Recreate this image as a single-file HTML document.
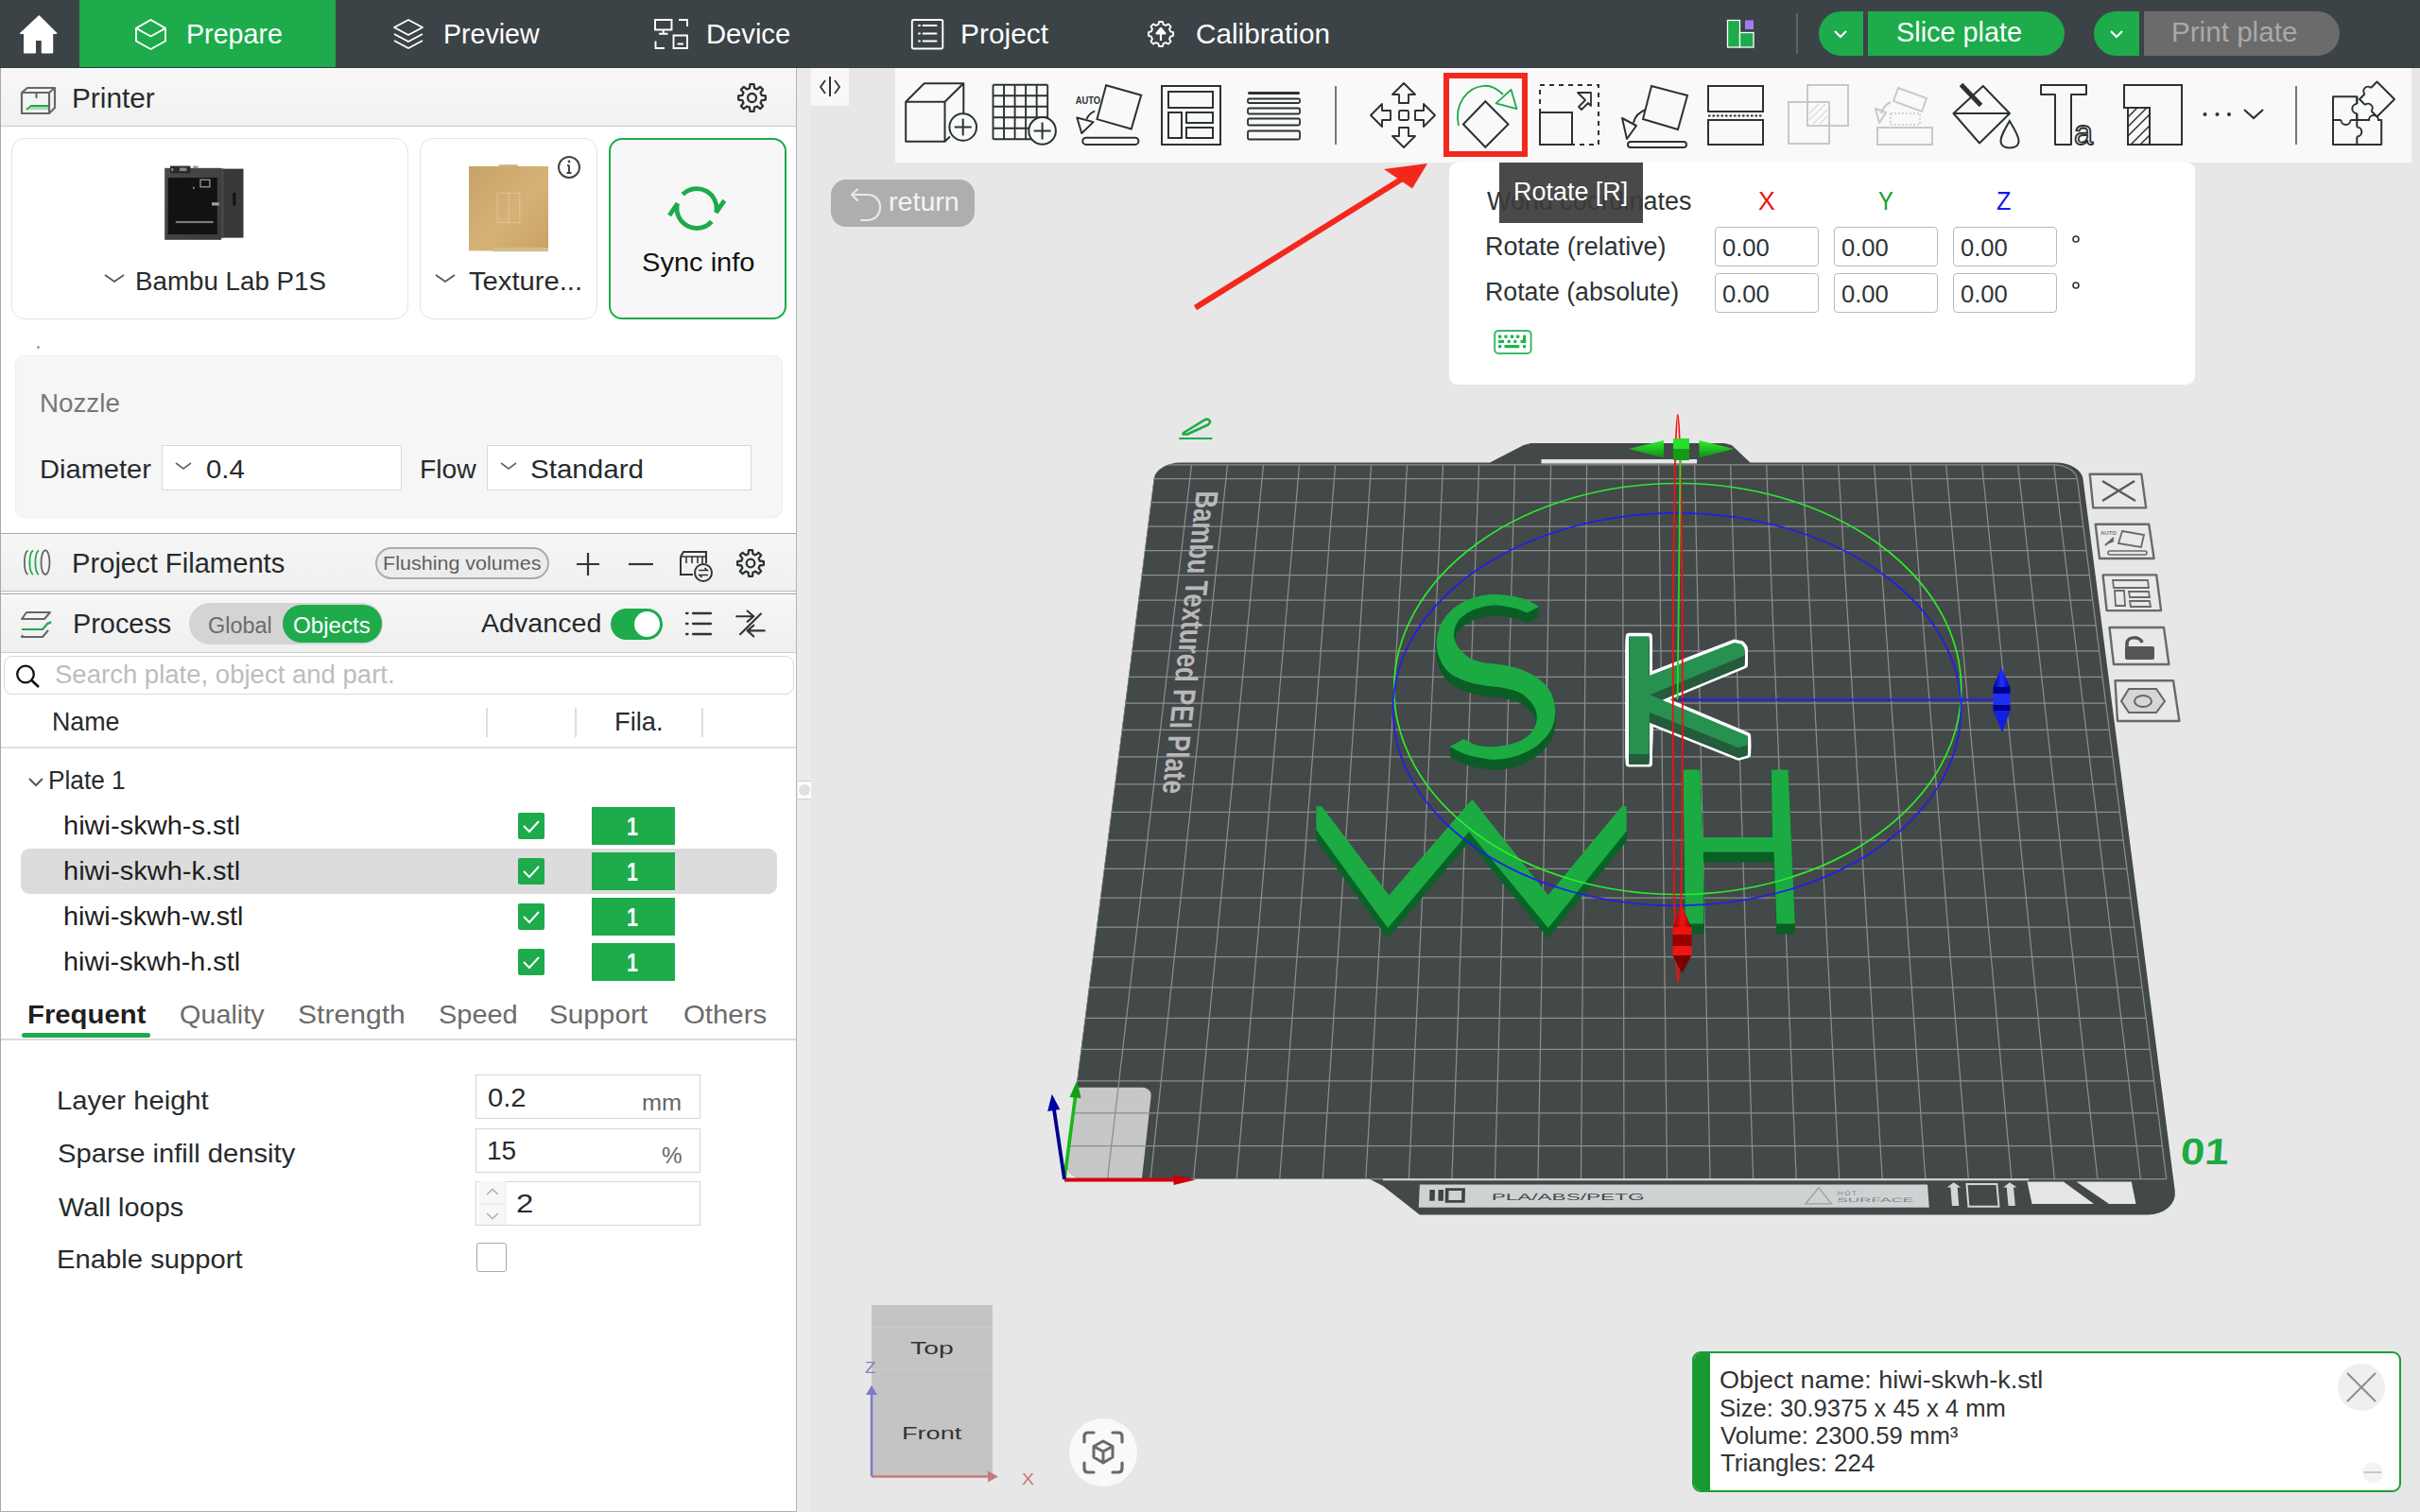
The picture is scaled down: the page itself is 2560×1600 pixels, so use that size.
<!DOCTYPE html>
<html><head><meta charset="utf-8"><style>
html,body{margin:0;padding:0;}
body{width:2560px;height:1600px;overflow:hidden;position:relative;background:#e7e7e7;font-family:"Liberation Sans", sans-serif;}
.a{position:absolute;box-sizing:border-box;}
.t{position:absolute;white-space:nowrap;line-height:1;font-family:"Liberation Sans", sans-serif;}
svg{overflow:visible;}
</style></head><body>
<div class="a" style="left:0px;top:0px;width:2560px;height:72px;background:#3b4347;"></div>
<div class="a" style="left:84px;top:0px;width:271px;height:71px;background:#1dab4b;"></div>
<div class="a" style="left:0px;top:71px;width:2560px;height:1px;background:#343a3d;"></div>
<svg class="a" style="left:0px;top:0px;" width="80" height="72" viewBox="0 0 80 72"><path d="M41.3,17 L21.8,35.3 L25.8,35.3 L25.8,55.8 L37.2,55.8 L37.2,42.3 L44.6,42.3 L44.6,55.8 L55.4,55.8 L55.4,35.3 L59.6,35.3 Z" fill="#fff" stroke="#fff" stroke-width="1.6" stroke-linejoin="round"/></svg>
<svg class="a" style="left:140px;top:16px;" width="40" height="40" viewBox="0 0 40 40"><path d="M19.5,5 L35,13.8 L35,27.5 L19.5,36 L4,27.5 L4,13.8 Z M4,13.8 L19.5,22.5 L35,13.8" fill="none" stroke="#fff" stroke-width="1.9" stroke-linejoin="round"/></svg>
<div class="t" style="left:197.0px;top:21.5px;font-size:29px;color:#ffffff;font-weight:normal;transform:scaleX(0.9879);transform-origin:0 0;">Prepare</div>
<svg class="a" style="left:412px;top:16px;" width="40" height="40" viewBox="0 0 40 40"><path d="M20,5 L35,13 L20,21 L5,13 Z M5,20 L20,28 L35,20 M5,27 L20,35 L35,27" fill="none" stroke="#fff" stroke-width="1.9" stroke-linejoin="round"/></svg>
<div class="t" style="left:468.8px;top:21.5px;font-size:29px;color:#ffffff;font-weight:normal;transform:scaleX(0.9851);transform-origin:0 0;">Preview</div>
<svg class="a" style="left:688px;top:16px;" width="44" height="40" viewBox="0 0 44 40"><path d="M5,5 H22.5 V15.5 H5 Z M13.7,15.5 V19.5 M9,19.8 H18.5 M30,5 H39 V12 M5.5,27.5 V35 H15 M24.5,21.5 H39 V35 H24.5 Z M28.5,30.5 H35" fill="none" stroke="#fff" stroke-width="1.9" stroke-linejoin="miter"/></svg>
<div class="t" style="left:746.7px;top:21.5px;font-size:29px;color:#ffffff;font-weight:normal;transform:scaleX(1.0059);transform-origin:0 0;">Device</div>
<svg class="a" style="left:960px;top:16px;" width="42" height="40" viewBox="0 0 42 40"><rect x="4.8" x2="0" y="5" width="32.5" height="30.5" rx="1.8" fill="none" stroke="#fff" stroke-width="1.9"/><path d="M12,11 H13 M16.5,11 H30.5 M12,19.5 H13 M16.5,19.5 H30.5 M12,27.5 H13 M16.5,27.5 H30.5" stroke="#fff" stroke-width="1.9" stroke-linecap="round"/></svg>
<div class="t" style="left:1015.7px;top:21.5px;font-size:29px;color:#ffffff;font-weight:normal;transform:scaleX(1.0302);transform-origin:0 0;">Project</div>
<svg class="a" style="left:1210px;top:16px;" width="36" height="40" viewBox="0 0 36 40"><path d="M31.07,18.14 L31.07,21.86 L28.17,22.61 L27.04,25.34 L28.56,27.93 L25.93,30.56 L23.34,29.04 L20.61,30.17 L19.86,33.07 L16.14,33.07 L15.39,30.17 L12.66,29.04 L10.07,30.56 L7.44,27.93 L8.96,25.34 L7.83,22.61 L4.93,21.86 L4.93,18.14 L7.83,17.39 L8.96,14.66 L7.44,12.07 L10.07,9.44 L12.66,10.96 L15.39,9.83 L16.14,6.93 L19.86,6.93 L20.61,9.83 L23.34,10.96 L25.93,9.44 L28.56,12.07 L27.04,14.66 L28.17,17.39Z" fill="none" stroke="#fff" stroke-width="1.9" stroke-linejoin="round"/><path d="M18,27 V16 M13.5,19.5 L18,14 L22.5,19.5 Z" fill="#fff" stroke="#fff" stroke-width="2.2" stroke-linejoin="round"/></svg>
<div class="t" style="left:1264.5px;top:21.5px;font-size:29px;color:#ffffff;font-weight:normal;transform:scaleX(1.0240);transform-origin:0 0;">Calibration</div>
<svg class="a" style="left:1822px;top:16px;" width="40" height="40" viewBox="0 0 40 40"><rect x="5.5" y="5.5" width="13" height="28.5" fill="#1dab4b" stroke="#fff" stroke-width="1.3"/><rect x="18.5" y="18.5" width="14.5" height="15.5" fill="#1dab4b" stroke="#fff" stroke-width="1.3"/><rect x="24" y="5.5" width="9" height="9.5" fill="#a57cf0"/></svg>
<div class="a" style="left:1900px;top:14px;width:2px;height:43px;background:#5d6569;"></div>
<div class="a" style="left:1924px;top:12px;width:47px;height:47px;background:#1dab4b;border-radius:23.5px 0 0 23.5px;"></div>
<svg class="a" style="left:1935px;top:28px;" width="24" height="16" viewBox="0 0 24 16"><path d="M6,5 L12,11 L18,5" fill="none" stroke="#fff" stroke-width="2"/></svg>
<div class="a" style="left:1976px;top:12px;width:208px;height:47px;background:#1dab4b;border-radius:0 23.5px 23.5px 0;"></div>
<div class="t" style="left:2006.2px;top:19.5px;font-size:29px;color:#ffffff;font-weight:normal;transform:scaleX(0.9950);transform-origin:0 0;">Slice plate</div>
<div class="a" style="left:2215px;top:12px;width:48px;height:47px;background:#1dab4b;border-radius:23.5px 0 0 23.5px;"></div>
<svg class="a" style="left:2227px;top:28px;" width="24" height="16" viewBox="0 0 24 16"><path d="M6,5 L12,11 L18,5" fill="none" stroke="#fff" stroke-width="2"/></svg>
<div class="a" style="left:2268px;top:12px;width:207px;height:47px;background:#6b6b6b;border-radius:0 23.5px 23.5px 0;"></div>
<div class="t" style="left:2296.5px;top:19.5px;font-size:29px;color:#a9a9a9;font-weight:normal;transform:scaleX(1.0213);transform-origin:0 0;">Print plate</div>
<div class="a" style="left:0px;top:72px;width:843px;height:1528px;background:#ffffff;border-left:1px solid #a8a8a8;border-right:1px solid #b4b4b4;border-bottom:1px solid #b0b0b0;"></div>
<div class="a" style="left:843px;top:72px;width:15px;height:1528px;background:#ebebeb;"></div>
<div class="a" style="left:844px;top:826px;width:14px;height:20px;background:#fdfdfd;border-top:1px solid #cfcfcf;border-bottom:1px solid #cfcfcf;"></div>
<div class="a" style="left:845px;top:830px;width:12px;height:12px;background:#e1e1e1;border-radius:6px;"></div>
<div class="a" style="left:1px;top:72px;width:841px;height:62px;background:linear-gradient(#f8f8f8,#f1f1f1);border-bottom:1px solid #c9c9c9;"></div>
<svg class="a" style="left:18px;top:84px;" width="44" height="42" viewBox="0 0 44 42"><path d="M5,14 L11,9 H40 V30 L34,36 H5 Z M5,14 H34 V36 M34,14 L40,9" fill="none" stroke="#666" stroke-width="2.2" stroke-linejoin="round"/><path d="M20.5,14 V19" stroke="#666" stroke-width="2.2" stroke-linecap="round"/><path d="M10,32 L15,28 H33" fill="none" stroke="#1dab4b" stroke-width="2.2"/><path d="M12,32 L16,29 H33 V32 Z" fill="#a6dcb6"/></svg>
<div class="t" style="left:75.7px;top:89.5px;font-size:29px;color:#262b2d;font-weight:normal;transform:scaleX(1.0272);transform-origin:0 0;">Printer</div>
<svg class="a" style="left:776px;top:84px;" width="40" height="40" viewBox="0 0 40 40"><path d="M33.86,17.46 L33.86,21.54 L29.67,22.11 L28.54,24.84 L31.10,28.21 L28.21,31.10 L24.84,28.54 L22.11,29.67 L21.54,33.86 L17.46,33.86 L16.89,29.67 L14.16,28.54 L10.79,31.10 L7.90,28.21 L10.46,24.84 L9.33,22.11 L5.14,21.54 L5.14,17.46 L9.33,16.89 L10.46,14.16 L7.90,10.79 L10.79,7.90 L14.16,10.46 L16.89,9.33 L17.46,5.14 L21.54,5.14 L22.11,9.33 L24.84,10.46 L28.21,7.90 L31.10,10.79 L28.54,14.16 L29.67,16.89Z" fill="none" stroke="#2b3133" stroke-width="2.3" stroke-linejoin="round"/><circle cx="19.5" cy="19.5" r="4.5" fill="none" stroke="#2b3133" stroke-width="2.3"/></svg>
<div class="a" style="left:12px;top:146px;width:420px;height:192px;background:#fff;border:1.5px solid #e3e3e3;border-radius:14px;"></div>
<div class="a" style="left:444px;top:146px;width:188px;height:192px;background:#fff;border:1.5px solid #e3e3e3;border-radius:14px;"></div>
<div class="a" style="left:644px;top:146px;width:188px;height:192px;background:#f7f7f7;border:2px solid #1dab4b;border-radius:14px;"></div>
<svg class="a" style="left:170px;top:172px;" width="92" height="86" viewBox="0 0 92 86"><defs><linearGradient id="pf" x1="0" y1="0" x2="1" y2="1"><stop offset="0" stop-color="#4a4a4a"/><stop offset="1" stop-color="#3a3a3a"/></linearGradient></defs><rect x="4.2" y="5.8" width="60" height="76" fill="url(#pf)"/><rect x="64.2" y="6.6" width="23.3" height="73" fill="#383838"/><rect x="64.2" y="6.6" width="3" height="73" fill="#444"/><rect x="7.8" y="16" width="52" height="60" fill="#121212"/><rect x="10" y="3.6" width="21.5" height="7.7" fill="#2a2a2a"/><rect x="11" y="6" width="2.5" height="3" fill="#4a8f8f"/><rect x="20" y="5.5" width="7.5" height="3.5" fill="#888"/><rect x="34.4" y="3.6" width="5" height="2.2" fill="#8a8a8a"/><rect x="42" y="18.2" width="9.9" height="7.6" fill="none" stroke="#9a9a9a" stroke-width="1.3"/><rect x="34" y="25.8" width="1.9" height="1.9" fill="#c8902a"/><rect x="15.8" y="61.9" width="40" height="2.2" fill="#7a7a7a"/><rect x="54" y="42.2" width="7.7" height="3.3" fill="#a0a0a0"/><rect x="76.2" y="32" width="3.3" height="13.5" fill="#141414"/></svg>
<svg class="a" style="left:100px;top:285px;" width="40" height="20" viewBox="0 0 40 20"><path d="M11,6 L21,13 L31,6" fill="none" stroke="#555" stroke-width="1.8"/></svg>
<div class="t" style="left:142.8px;top:284.3px;font-size:28px;color:#262b2d;font-weight:normal;transform:scaleX(0.9905);transform-origin:0 0;">Bambu Lab P1S</div>
<svg class="a" style="left:490px;top:168px;" width="96" height="104" viewBox="0 0 96 104"><defs><linearGradient id="pl" x1="0" y1="0" x2="1" y2="1"><stop offset="0" stop-color="#c8a266"/><stop offset="0.55" stop-color="#d5b277"/><stop offset="1" stop-color="#c9a165"/></linearGradient></defs><rect x="6" y="8" width="84" height="89.4" fill="url(#pl)"/><rect x="37.6" y="6.3" width="20.4" height="3" rx="1" fill="#cfae74"/><rect x="31.5" y="93.9" width="58.5" height="4.3" fill="#d3bd8e"/><rect x="36.2" y="36.3" width="23.6" height="31.2" fill="none" stroke="rgba(255,255,255,0.28)" stroke-width="1"/><path d="M48,36.3 V67.5" stroke="rgba(255,255,255,0.25)" stroke-width="1"/></svg>
<svg class="a" style="left:586px;top:161px;" width="32" height="32" viewBox="0 0 32 32"><circle cx="16" cy="16" r="11" fill="none" stroke="#444" stroke-width="2"/><path d="M16,14 V22 M13.5,22 H18.5 M14,14 H16" stroke="#444" stroke-width="2"/><circle cx="16" cy="10" r="1.4" fill="#444"/></svg>
<svg class="a" style="left:451px;top:285px;" width="40" height="20" viewBox="0 0 40 20"><path d="M10,6 L20,13 L30,6" fill="none" stroke="#555" stroke-width="1.8"/></svg>
<div class="t" style="left:495.5px;top:284.3px;font-size:28px;color:#262b2d;font-weight:normal;transform:scaleX(1.0423);transform-origin:0 0;">Texture...</div>
<svg class="a" style="left:0px;top:0px;" width="842" height="400" viewBox="0 0 842 400"><path d="M722.2,205.7 A21,21 0 0 1 757.6,224.8 L766.3,212.1" fill="none" stroke="#1dab4b" stroke-width="4.8" stroke-linejoin="miter"/><path d="M752.8,234.3 A21,21 0 0 1 716.6,215.4 L708.1,228" fill="none" stroke="#1dab4b" stroke-width="4.8" stroke-linejoin="miter"/></svg>
<div class="t" style="left:678.7px;top:264.3px;font-size:28px;color:#111;font-weight:normal;transform:scaleX(1.0377);transform-origin:0 0;">Sync info</div>
<div class="a" style="left:39px;top:366px;width:3px;height:3px;background:#9a9a9a;border-radius:2px;"></div>
<div class="a" style="left:16px;top:376px;width:812px;height:172px;background:#f6f6f6;border:1.5px solid #ececec;border-radius:10px;"></div>
<div class="t" style="left:41.7px;top:414.1px;font-size:27px;color:#777;font-weight:normal;transform:scaleX(1.0278);transform-origin:0 0;">Nozzle</div>
<div class="t" style="left:41.7px;top:482.9px;font-size:28px;color:#262b2d;font-weight:normal;transform:scaleX(1.0387);transform-origin:0 0;">Diameter</div>
<div class="a" style="left:171px;top:471px;width:254px;height:48px;background:#fff;border:1.5px solid #d9d9d9;"></div>
<svg class="a" style="left:180px;top:484px;" width="30" height="20" viewBox="0 0 30 20"><path d="M6,6 L14,12 L22,6" fill="none" stroke="#666" stroke-width="1.6"/></svg>
<div class="t" style="left:217.7px;top:482.9px;font-size:28px;color:#262b2d;font-weight:normal;transform:scaleX(1.0486);transform-origin:0 0;">0.4</div>
<div class="t" style="left:444.4px;top:482.9px;font-size:28px;color:#262b2d;font-weight:normal;transform:scaleX(1.0105);transform-origin:0 0;">Flow</div>
<div class="a" style="left:515px;top:471px;width:280px;height:48px;background:#fff;border:1.5px solid #d9d9d9;"></div>
<svg class="a" style="left:524px;top:484px;" width="30" height="20" viewBox="0 0 30 20"><path d="M6,6 L14,12 L22,6" fill="none" stroke="#666" stroke-width="1.6"/></svg>
<div class="t" style="left:560.7px;top:482.9px;font-size:28px;color:#262b2d;font-weight:normal;transform:scaleX(1.0552);transform-origin:0 0;">Standard</div>
<div class="a" style="left:1px;top:564px;width:841px;height:65px;background:linear-gradient(#f6f6f6,#efefef);border-top:1.5px solid #a9a9a9;"></div>
<div class="a" style="left:1px;top:625px;width:841px;height:1px;background:#bdbdbd;"></div>
<div class="a" style="left:1px;top:626px;width:841px;height:2px;background:#f6f6f6;"></div>
<div class="a" style="left:1px;top:628px;width:841px;height:1px;background:#a4a4a4;"></div>
<svg class="a" style="left:20px;top:578px;" width="40" height="36" viewBox="0 0 40 36"><path d="M9.5,4.5 A4.5,13 0 0 0 9.5,30" fill="none" stroke="#666" stroke-width="1.8"/><path d="M15,4.5 A4.5,13 0 0 0 15,30" fill="none" stroke="#1dab4b" stroke-width="1.8"/><path d="M21,4.5 A4.5,13 0 0 0 21,30" fill="none" stroke="#1dab4b" stroke-width="1.8"/><ellipse cx="28" cy="17.2" rx="4.5" ry="12.8" fill="none" stroke="#666" stroke-width="1.8"/></svg>
<div class="t" style="left:75.7px;top:582.0px;font-size:29px;color:#262b2d;font-weight:normal;transform:scaleX(1.0057);transform-origin:0 0;">Project Filaments</div>
<div class="a" style="left:397px;top:579px;width:184px;height:34px;background:#ececec;border:2px solid #ababab;border-radius:17px;"></div>
<div class="t" style="left:405.2px;top:585.2px;font-size:21px;color:#606060;font-weight:normal;transform:scaleX(1.0248);transform-origin:0 0;">Flushing volumes</div>
<svg class="a" style="left:604px;top:580px;" width="36" height="34" viewBox="0 0 36 34"><path d="M18,5 V29 M6,17 H30" stroke="#333" stroke-width="2.2"/></svg>
<svg class="a" style="left:660px;top:580px;" width="36" height="34" viewBox="0 0 36 34"><path d="M5,17 H31" stroke="#333" stroke-width="2.2"/></svg>
<svg class="a" style="left:714px;top:578px;" width="44" height="38" viewBox="0 0 44 38"><path d="M6,11 L9,6 H33 V18 M6,11 V30 H19" fill="none" stroke="#333" stroke-width="2"/><path d="M6,11 H33 M12,11 V18 M18,11 V18 M24,11 V18 M29,11 V18" stroke="#333" stroke-width="1.6"/><circle cx="30" cy="28" r="9" fill="#f3f3f3" stroke="#333" stroke-width="2"/><path d="M25,25.5 H34 L31.5,23 M35,30.5 H26 L28.5,33" fill="none" stroke="#333" stroke-width="1.7"/></svg>
<svg class="a" style="left:775px;top:578px;" width="40" height="36" viewBox="0 0 40 36"><path d="M32.86,16.03 L32.86,19.97 L28.69,20.49 L27.61,23.09 L30.20,26.41 L27.41,29.20 L24.09,26.61 L21.49,27.69 L20.97,31.86 L17.03,31.86 L16.51,27.69 L13.91,26.61 L10.59,29.20 L7.80,26.41 L10.39,23.09 L9.31,20.49 L5.14,19.97 L5.14,16.03 L9.31,15.51 L10.39,12.91 L7.80,9.59 L10.59,6.80 L13.91,9.39 L16.51,8.31 L17.03,4.14 L20.97,4.14 L21.49,8.31 L24.09,9.39 L27.41,6.80 L30.20,9.59 L27.61,12.91 L28.69,15.51Z" fill="none" stroke="#2b3133" stroke-width="2.3" stroke-linejoin="round"/><circle cx="19" cy="18" r="4.3" fill="none" stroke="#2b3133" stroke-width="2.3"/></svg>
<div class="a" style="left:1px;top:629.5px;width:841px;height:61.5px;background:linear-gradient(#f6f6f6,#efefef);border-bottom:1.5px solid #cfcfcf;"></div>
<svg class="a" style="left:18px;top:642px;" width="42" height="36" viewBox="0 0 42 36"><path d="M10,6 H35 L29,13 H5 Z" fill="none" stroke="#666" stroke-width="2" stroke-linejoin="round"/><path d="M33,17 L27,24 H5" fill="none" stroke="#1dab4b" stroke-width="2.2" stroke-linejoin="round"/><path d="M33,18 L36,16" stroke="#1dab4b" stroke-width="2.2"/><path d="M33,25 L27,32 H5 L6,30" fill="none" stroke="#666" stroke-width="2" stroke-linejoin="round"/></svg>
<div class="t" style="left:76.8px;top:645.5px;font-size:29px;color:#262b2d;font-weight:normal;transform:scaleX(0.9951);transform-origin:0 0;">Process</div>
<div class="a" style="left:200px;top:638px;width:205px;height:44px;background:#d4d4d4;border-radius:22px;"></div>
<div class="a" style="left:299px;top:640px;width:105px;height:40px;background:#1dab4b;border-radius:20px;"></div>
<div class="t" style="left:220.2px;top:650.5px;font-size:23px;color:#6b6b6b;font-weight:normal;transform:scaleX(1.0196);transform-origin:0 0;">Global</div>
<div class="t" style="left:310.0px;top:649.7px;font-size:24px;color:#fff;font-weight:normal;transform:scaleX(1.0063);transform-origin:0 0;">Objects</div>
<div class="t" style="left:509.0px;top:646.3px;font-size:28px;color:#262b2d;font-weight:normal;transform:scaleX(1.0224);transform-origin:0 0;">Advanced</div>
<div class="a" style="left:646px;top:644px;width:55px;height:33px;background:#1dab4b;border-radius:17px;"></div>
<div class="a" style="left:671px;top:647px;width:27px;height:27px;background:#fff;border-radius:14px;"></div>
<svg class="a" style="left:718px;top:640px;" width="42" height="40" viewBox="0 0 42 40"><path d="M8,9 H9.5 M8,20 H9.5 M8,31 H9.5 M15,9 H34 M15,20 H34 M15,31 H34" stroke="#333" stroke-width="2.3" stroke-linecap="round"/></svg>
<svg class="a" style="left:774px;top:638px;" width="42" height="42" viewBox="0 0 42 42"><path d="M5.2,14.2 H23.3 M16.6,8.5 L23.3,14.2 L16.6,19.9 M30.9,11.4 L9.0,33.2 M34.7,29.4 H16.6 M23.3,23.7 L16.6,29.4 L23.3,35.5" fill="none" stroke="#333" stroke-width="2.1" stroke-linecap="round" stroke-linejoin="round"/></svg>
<div class="a" style="left:4px;top:694px;width:836px;height:41px;background:#fff;border:1.5px solid #d9d9d9;border-radius:9px;"></div>
<svg class="a" style="left:14px;top:700px;" width="34" height="32" viewBox="0 0 34 32"><circle cx="13" cy="13.5" r="8.8" fill="none" stroke="#111" stroke-width="2.3"/><path d="M19.5,20 L27,27" stroke="#111" stroke-width="2.6"/></svg>
<div class="t" style="left:57.7px;top:700.6px;font-size:27px;color:#bdbdbd;font-weight:normal;transform:scaleX(1.0195);transform-origin:0 0;">Search plate, object and part.</div>
<div class="t" style="left:54.8px;top:750.3px;font-size:28px;color:#262b2d;font-weight:normal;transform:scaleX(0.9577);transform-origin:0 0;">Name</div>
<div class="a" style="left:514px;top:749px;width:1.5px;height:31px;background:#dedede;"></div>
<div class="a" style="left:608px;top:749px;width:1.5px;height:31px;background:#dedede;"></div>
<div class="a" style="left:742px;top:749px;width:1.5px;height:31px;background:#dedede;"></div>
<div class="t" style="left:650.3px;top:750.3px;font-size:28px;color:#262b2d;font-weight:normal;transform:scaleX(0.9741);transform-origin:0 0;">Fila.</div>
<div class="a" style="left:1px;top:790px;width:841px;height:2px;background:#e1e1e1;"></div>
<svg class="a" style="left:26px;top:816px;" width="24" height="24" viewBox="0 0 24 24"><path d="M5,8 L12,15 L19,8" fill="none" stroke="#555" stroke-width="2"/></svg>
<div class="t" style="left:50.7px;top:812.3px;font-size:28px;color:#262b2d;font-weight:normal;transform:scaleX(0.9365);transform-origin:0 0;">Plate 1</div>
<div class="a" style="left:22px;top:898px;width:800px;height:48px;background:#dcdcdc;border-radius:9px;"></div>
<div class="t" style="left:66.6px;top:860.3px;font-size:28px;color:#1e1e1e;font-weight:normal;transform:scaleX(1.0368);transform-origin:0 0;">hiwi-skwh-s.stl</div>
<div class="a" style="left:548px;top:860px;width:28px;height:28px;background:#1dab4b;border-radius:2px;"></div>
<svg class="a" style="left:548px;top:860px;" width="28" height="28" viewBox="0 0 28 28"><path d="M6,14 L12,20 L22,9" fill="none" stroke="#fff" stroke-width="2"/></svg>
<div class="a" style="left:626px;top:854px;width:88px;height:40px;background:#1dab4b;"></div>
<div class="t" style="left:663.2px;top:861.3px;font-size:28px;color:#fff;font-weight:bold;transform:scaleX(0.7692);transform-origin:0 0;">1</div>
<div class="t" style="left:66.6px;top:908.3px;font-size:28px;color:#1e1e1e;font-weight:normal;transform:scaleX(1.0368);transform-origin:0 0;">hiwi-skwh-k.stl</div>
<div class="a" style="left:548px;top:908px;width:28px;height:28px;background:#1dab4b;border-radius:2px;"></div>
<svg class="a" style="left:548px;top:908px;" width="28" height="28" viewBox="0 0 28 28"><path d="M6,14 L12,20 L22,9" fill="none" stroke="#fff" stroke-width="2"/></svg>
<div class="a" style="left:626px;top:902px;width:88px;height:40px;background:#1dab4b;"></div>
<div class="t" style="left:663.2px;top:909.3px;font-size:28px;color:#fff;font-weight:bold;transform:scaleX(0.7692);transform-origin:0 0;">1</div>
<div class="t" style="left:66.6px;top:956.3px;font-size:28px;color:#1e1e1e;font-weight:normal;transform:scaleX(1.0290);transform-origin:0 0;">hiwi-skwh-w.stl</div>
<div class="a" style="left:548px;top:956px;width:28px;height:28px;background:#1dab4b;border-radius:2px;"></div>
<svg class="a" style="left:548px;top:956px;" width="28" height="28" viewBox="0 0 28 28"><path d="M6,14 L12,20 L22,9" fill="none" stroke="#fff" stroke-width="2"/></svg>
<div class="a" style="left:626px;top:950px;width:88px;height:40px;background:#1dab4b;"></div>
<div class="t" style="left:663.2px;top:957.3px;font-size:28px;color:#fff;font-weight:bold;transform:scaleX(0.7692);transform-origin:0 0;">1</div>
<div class="t" style="left:66.6px;top:1004.3px;font-size:28px;color:#1e1e1e;font-weight:normal;transform:scaleX(1.0281);transform-origin:0 0;">hiwi-skwh-h.stl</div>
<div class="a" style="left:548px;top:1004px;width:28px;height:28px;background:#1dab4b;border-radius:2px;"></div>
<svg class="a" style="left:548px;top:1004px;" width="28" height="28" viewBox="0 0 28 28"><path d="M6,14 L12,20 L22,9" fill="none" stroke="#fff" stroke-width="2"/></svg>
<div class="a" style="left:626px;top:998px;width:88px;height:40px;background:#1dab4b;"></div>
<div class="t" style="left:663.2px;top:1005.3px;font-size:28px;color:#fff;font-weight:bold;transform:scaleX(0.7692);transform-origin:0 0;">1</div>
<div class="t" style="left:28.7px;top:1060.1px;font-size:28px;color:#1f1f1f;font-weight:bold;transform:scaleX(1.0471);transform-origin:0 0;">Frequent</div>
<div class="t" style="left:189.7px;top:1060.1px;font-size:28px;color:#6b6b6b;font-weight:normal;transform:scaleX(1.0279);transform-origin:0 0;">Quality</div>
<div class="t" style="left:315.3px;top:1060.1px;font-size:28px;color:#6b6b6b;font-weight:normal;transform:scaleX(1.0745);transform-origin:0 0;">Strength</div>
<div class="t" style="left:463.7px;top:1060.1px;font-size:28px;color:#6b6b6b;font-weight:normal;transform:scaleX(1.0333);transform-origin:0 0;">Speed</div>
<div class="t" style="left:581.1px;top:1060.1px;font-size:28px;color:#6b6b6b;font-weight:normal;transform:scaleX(1.0611);transform-origin:0 0;">Support</div>
<div class="t" style="left:723.4px;top:1060.1px;font-size:28px;color:#6b6b6b;font-weight:normal;transform:scaleX(1.0495);transform-origin:0 0;">Others</div>
<div class="a" style="left:23px;top:1093px;width:136px;height:5px;background:#1dab4b;border-radius:3px;"></div>
<div class="a" style="left:1px;top:1099px;width:841px;height:1.5px;background:#dadada;"></div>
<div class="t" style="left:60.2px;top:1150.9px;font-size:28px;color:#262b2d;font-weight:normal;transform:scaleX(1.0429);transform-origin:0 0;">Layer height</div>
<div class="a" style="left:503px;top:1137px;width:238px;height:47px;background:#fff;border:1.5px solid #d6d6d6;"></div>
<div class="t" style="left:516.0px;top:1148.1px;font-size:28px;color:#262b2d;font-weight:normal;transform:scaleX(1.0411);transform-origin:0 0;">0.2</div>
<div class="t" style="left:679.4px;top:1154.7px;font-size:24px;color:#666;font-weight:normal;transform:scaleX(1.0541);transform-origin:0 0;">mm</div>
<div class="t" style="left:61.2px;top:1207.3px;font-size:28px;color:#262b2d;font-weight:normal;transform:scaleX(1.0417);transform-origin:0 0;">Sparse infill density</div>
<div class="a" style="left:503px;top:1194px;width:238px;height:47px;background:#fff;border:1.5px solid #d6d6d6;"></div>
<div class="t" style="left:515.0px;top:1203.8px;font-size:28px;color:#262b2d;font-weight:normal;transform:scaleX(1.0000);transform-origin:0 0;">15</div>
<div class="t" style="left:700.2px;top:1211.2px;font-size:24px;color:#666;font-weight:normal;transform:scaleX(1.0127);transform-origin:0 0;">%</div>
<div class="t" style="left:62.2px;top:1263.7px;font-size:28px;color:#262b2d;font-weight:normal;transform:scaleX(1.0315);transform-origin:0 0;">Wall loops</div>
<div class="a" style="left:503px;top:1250px;width:238px;height:47px;background:#fff;border:1.5px solid #d6d6d6;"></div>
<div class="a" style="left:507px;top:1250px;width:28px;height:46px;background:#f7f7f7;border-right:1px solid #ececec;"></div>
<svg class="a" style="left:507px;top:1252px;" width="28" height="44" viewBox="0 0 28 44"><path d="M8,12 L14,6.5 L20,12 M8,32 L14,37.5 L20,32" fill="none" stroke="#aaa" stroke-width="1.4"/><path d="M2,22 H26" stroke="#ddd" stroke-width="1"/></svg>
<div class="t" style="left:545.6px;top:1259.8px;font-size:28px;color:#262b2d;font-weight:normal;transform:scaleX(1.1765);transform-origin:0 0;">2</div>
<div class="t" style="left:60.2px;top:1319.3px;font-size:28px;color:#262b2d;font-weight:normal;transform:scaleX(1.0444);transform-origin:0 0;">Enable support</div>
<div class="a" style="left:504px;top:1314.5px;width:32px;height:31px;background:#fff;border:1.5px solid #a9a9a9;border-radius:3px;"></div>
<svg class="a" style="left:0;top:0" width="2560" height="1600" viewBox="0 0 2560 1600"><defs><clipPath id="pc"><polygon points="1128.25,1229.98 1128.25,1233.41 1129.12,1236.71 1130.83,1239.75 1133.32,1242.43 1136.49,1244.62 1140.22,1246.25 1144.37,1247.26 1148.77,1247.60 1448.42,1247.60 1462.61,1254.68 1501.81,1285.40 2271.82,1285.40 2278.03,1284.92 2283.88,1283.49 2289.15,1281.16 2293.62,1278.04 2297.12,1274.24 2299.53,1269.92 2300.75,1265.23 2300.73,1260.37 2203.50,506.74 2202.55,503.35 2200.61,500.10 2197.76,497.11 2194.12,494.49 2189.81,492.34 2185.01,490.75 2179.90,489.77 2174.68,489.44 1851.44,489.44 1831.85,471.07 1824.23,469.12 1619.46,469.12 1611.86,471.07 1576.06,489.44 1249.40,489.44 1244.18,489.77 1239.07,490.75 1234.27,492.34 1229.97,494.49 1226.32,497.11 1223.48,500.10 1221.55,503.35 1220.60,506.74"/></clipPath></defs><polygon points="1128.25,1229.98 1128.25,1233.41 1129.12,1236.71 1130.83,1239.75 1133.32,1242.43 1136.49,1244.62 1140.22,1246.25 1144.37,1247.26 1148.77,1247.60 1448.42,1247.60 1462.61,1254.68 1501.81,1285.40 2271.82,1285.40 2278.03,1284.92 2283.88,1283.49 2289.15,1281.16 2293.62,1278.04 2297.12,1274.24 2299.53,1269.92 2300.75,1265.23 2300.73,1260.37 2203.50,506.74 2202.55,503.35 2200.61,500.10 2197.76,497.11 2194.12,494.49 2189.81,492.34 2185.01,490.75 2179.90,489.77 2174.68,489.44 1851.44,489.44 1831.85,471.07 1824.23,469.12 1619.46,469.12 1611.86,471.07 1576.06,489.44 1249.40,489.44 1244.18,489.77 1239.07,490.75 1234.27,492.34 1229.97,494.49 1226.32,497.11 1223.48,500.10 1221.55,503.35 1220.60,506.74" fill="#434849"/><polygon points="1128.25,1229.98 1128.44,1234.53 1130.17,1238.77 1133.32,1242.43 1137.68,1245.23 1142.95,1247.00 1148.77,1247.60 1207.97,1247.60 1217.68,1159.16 1217.42,1156.53 1216.10,1154.16 1213.84,1152.29 1210.86,1151.08 1207.47,1150.67 1138.38,1150.67" fill="#c6c7c6"/><path d="M1126.00,1247.60L2291.80,1247.60M1130.48,1212.50L2287.33,1212.50M1134.90,1177.94L2282.92,1177.94M1139.24,1143.90L2278.59,1143.90M1143.52,1110.37L2274.31,1110.37M1147.74,1077.34L2270.10,1077.34M1151.90,1044.81L2265.96,1044.81M1155.99,1012.74L2261.87,1012.74M1160.02,981.15L2257.85,981.15M1164.00,950.01L2253.88,950.01M1167.92,919.32L2249.97,919.32M1171.78,889.07L2246.11,889.07M1175.59,859.25L2242.31,859.25M1179.35,829.84L2238.56,829.84M1183.05,800.85L2234.87,800.85M1186.70,772.26L2231.23,772.26M1190.30,744.06L2227.63,744.06M1193.85,716.25L2224.09,716.25M1197.35,688.81L2220.59,688.81M1200.81,661.75L2217.14,661.75M1204.22,635.05L2213.74,635.05M1207.58,608.70L2210.38,608.70M1210.90,582.71L2207.07,582.71M1214.18,557.05L2203.80,557.05M1217.41,531.73L2200.58,531.73M1220.60,506.74L2197.39,506.74M1222.50,491.90L2172.70,491.90M1126.00,1247.60L1222.50,491.90M1171.54,1247.60L1260.51,491.90M1217.08,1247.60L1298.52,491.90M1262.62,1247.60L1336.52,491.90M1308.16,1247.60L1374.53,491.90M1353.70,1247.60L1412.54,491.90M1399.23,1247.60L1450.55,491.90M1444.77,1247.60L1488.55,491.90M1490.31,1247.60L1526.56,491.90M1535.85,1247.60L1564.57,491.90M1581.39,1247.60L1602.58,491.90M1626.93,1247.60L1640.59,491.90M1672.47,1247.60L1678.59,491.90M1718.01,1247.60L1716.60,491.90M1763.55,1247.60L1754.61,491.90M1809.09,1247.60L1792.62,491.90M1854.62,1247.60L1830.63,491.90M1900.16,1247.60L1868.63,491.90M1945.70,1247.60L1906.64,491.90M1991.24,1247.60L1944.65,491.90M2036.78,1247.60L1982.66,491.90M2082.32,1247.60L2020.66,491.90M2127.86,1247.60L2058.67,491.90M2173.40,1247.60L2096.68,491.90M2218.94,1247.60L2134.69,491.90M2264.48,1247.60L2172.70,491.90M2291.80,1247.60L2197.39,506.74M2197.39,506.74 L2196.58,503.84 L2194.93,501.05 L2192.49,498.48 L2189.37,496.23 L2185.68,494.39 L2181.56,493.03 L2177.18,492.18 L2172.70,491.90" stroke="#8b8e8c" stroke-width="1.25" fill="none" clip-path="url(#pc)"/><path d="M1463.0,1248.1L2146.1,1248.1" stroke="#cdd0d0" stroke-width="2.2"/><polygon points="1501.88,1253.62 2039.04,1253.62 2040.78,1277.86 1500.78,1277.86" fill="#cfd2d3"/><g transform="matrix(4.5716,0.0000,0.0644,-3.5630,1626.61,1265.35)"><text x="-10.7" y="1.3" font-family="Liberation Sans" font-size="2.8" fill="#45494a" transform="scale(1,-1)" textLength="35.4" lengthAdjust="spacingAndGlyphs">PLA/ABS/PETG</text><rect x="-25" y="-1.5" width="1.2" height="3.3" fill="#3f4344"/><rect x="-23" y="-1.5" width="1.2" height="3.3" fill="#3f4344"/><rect x="-21" y="-1.7" width="3.8" height="3.6" fill="none" stroke="#3f4344" stroke-width="0.8"/><text x="69.3" y="-0.2" font-family="Liberation Sans" font-size="1.8" fill="#80848a" transform="scale(1,-1)" letter-spacing="0.35">HOT</text><text x="69.3" y="2.0" font-family="Liberation Sans" font-size="1.8" fill="#80848a" transform="scale(1,-1)" textLength="17.7" lengthAdjust="spacingAndGlyphs">SURFACE</text><path d="M62,2.4 L65,-2.4 L68,2.4 Z" fill="none" stroke="#9a9e9f" stroke-width="0.3" transform="scale(1,-1)"/></g><polygon points="2059.77,1256.46 2066.66,1251.14 2074.37,1256.46 2070.72,1256.46 2072.27,1276.07 2064.94,1276.07 2063.42,1256.46" fill="#d4d7d7"/><polygon points="2119.09,1256.46 2125.90,1251.14 2133.69,1256.46 2130.04,1256.46 2131.84,1276.07 2124.51,1276.07 2122.74,1256.46" fill="#d4d7d7"/><polygon points="2080.47,1252.91 2112.39,1252.91 2114.49,1276.79 2082.41,1276.79" fill="none" stroke="#d4d7d7" stroke-width="2"/><polygon points="2144.52,1250.43 2182.80,1250.43 2215.00,1273.92 2149.51,1273.92" fill="#e6e6e6"/><polygon points="2196.47,1250.43 2254.80,1250.43 2259.43,1273.92 2231.03,1273.92" fill="#e6e6e6"/><polygon points="1631.13,489.68 1794.47,489.68 1794.40,486.73 1631.19,486.73" fill="#e6e6e6" stroke="#e6e6e6" stroke-width="1.5" stroke-linejoin="round"/><g transform="matrix(-0.3050,2.7054,-3.9835,-0.0000,1265.66,519.40)"><text x="0" y="0" font-family="Liberation Sans" font-weight="bold" font-size="8.4" fill="#b8b8b8" textLength="118.5" lengthAdjust="spacingAndGlyphs">Bambu Textured PEI Plate</text></g><path d="M1628.39,641.83 C1625.41,640.39 1617.91,635.37 1610.53,633.23 C1603.14,631.09 1592.45,629.22 1584.07,628.99 C1575.70,628.77 1567.76,629.66 1560.26,631.90 C1552.77,634.15 1545.05,637.86 1539.10,642.49 C1533.15,647.12 1527.75,653.73 1524.55,659.68 C1521.35,665.63 1520.36,672.47 1519.92,678.20 C1519.48,683.93 1520.03,688.78 1521.90,694.07 C1523.78,699.37 1526.53,705.54 1531.16,709.95 C1535.79,714.36 1542.85,717.88 1549.68,720.53 C1556.52,723.17 1565.56,724.63 1572.17,725.82 C1578.78,727.01 1583.19,726.35 1589.37,727.67 C1595.54,728.99 1603.69,730.54 1609.21,733.76 C1614.72,736.98 1619.68,742.57 1622.43,746.98 C1625.19,751.39 1625.96,755.80 1625.74,760.21 C1625.52,764.62 1624.09,769.47 1621.11,773.44 C1618.13,777.41 1614.06,781.27 1607.88,784.02 C1601.71,786.78 1591.57,789.20 1584.07,789.97 C1576.58,790.75 1568.86,789.97 1562.91,788.65 C1556.96,787.33 1550.78,783.14 1548.36,782.04 L1533.81,789.97 C1536.46,791.30 1543.73,795.82 1549.68,797.91 C1555.63,800.00 1563.79,801.59 1569.52,802.54 C1575.26,803.49 1578.12,804.08 1584.07,803.60 C1590.03,803.11 1598.18,802.12 1605.24,799.63 C1612.29,797.14 1620.45,793.24 1626.40,788.65 C1632.35,784.07 1637.82,778.18 1640.95,772.12 C1644.08,766.05 1645.19,758.67 1645.19,752.28 C1645.19,745.88 1643.64,739.27 1640.95,733.76 C1638.26,728.25 1634.12,723.35 1629.05,719.21 C1623.98,715.06 1617.14,711.49 1610.53,708.89 C1603.92,706.29 1596.42,704.92 1589.37,703.60 C1582.31,702.28 1574.15,702.32 1568.20,700.95 C1562.25,699.59 1558.06,698.31 1553.65,695.40 C1549.24,692.49 1544.35,687.46 1541.75,683.49 C1539.14,679.52 1538.04,675.78 1538.04,671.59 C1538.04,667.40 1539.37,662.22 1541.75,658.36 C1544.13,654.50 1547.92,651.13 1552.33,648.44 C1556.74,645.75 1562.91,643.54 1568.20,642.22 C1573.49,640.90 1578.34,640.24 1584.07,640.50 C1589.81,640.77 1597.30,642.49 1602.59,643.81 C1607.88,645.13 1613.62,647.67 1615.82,648.44 Z" transform="translate(0,11)" fill="#0b5e26" /><path d="M1628.39,641.83 C1625.41,640.39 1617.91,635.37 1610.53,633.23 C1603.14,631.09 1592.45,629.22 1584.07,628.99 C1575.70,628.77 1567.76,629.66 1560.26,631.90 C1552.77,634.15 1545.05,637.86 1539.10,642.49 C1533.15,647.12 1527.75,653.73 1524.55,659.68 C1521.35,665.63 1520.36,672.47 1519.92,678.20 C1519.48,683.93 1520.03,688.78 1521.90,694.07 C1523.78,699.37 1526.53,705.54 1531.16,709.95 C1535.79,714.36 1542.85,717.88 1549.68,720.53 C1556.52,723.17 1565.56,724.63 1572.17,725.82 C1578.78,727.01 1583.19,726.35 1589.37,727.67 C1595.54,728.99 1603.69,730.54 1609.21,733.76 C1614.72,736.98 1619.68,742.57 1622.43,746.98 C1625.19,751.39 1625.96,755.80 1625.74,760.21 C1625.52,764.62 1624.09,769.47 1621.11,773.44 C1618.13,777.41 1614.06,781.27 1607.88,784.02 C1601.71,786.78 1591.57,789.20 1584.07,789.97 C1576.58,790.75 1568.86,789.97 1562.91,788.65 C1556.96,787.33 1550.78,783.14 1548.36,782.04 L1533.81,789.97 C1536.46,791.30 1543.73,795.82 1549.68,797.91 C1555.63,800.00 1563.79,801.59 1569.52,802.54 C1575.26,803.49 1578.12,804.08 1584.07,803.60 C1590.03,803.11 1598.18,802.12 1605.24,799.63 C1612.29,797.14 1620.45,793.24 1626.40,788.65 C1632.35,784.07 1637.82,778.18 1640.95,772.12 C1644.08,766.05 1645.19,758.67 1645.19,752.28 C1645.19,745.88 1643.64,739.27 1640.95,733.76 C1638.26,728.25 1634.12,723.35 1629.05,719.21 C1623.98,715.06 1617.14,711.49 1610.53,708.89 C1603.92,706.29 1596.42,704.92 1589.37,703.60 C1582.31,702.28 1574.15,702.32 1568.20,700.95 C1562.25,699.59 1558.06,698.31 1553.65,695.40 C1549.24,692.49 1544.35,687.46 1541.75,683.49 C1539.14,679.52 1538.04,675.78 1538.04,671.59 C1538.04,667.40 1539.37,662.22 1541.75,658.36 C1544.13,654.50 1547.92,651.13 1552.33,648.44 C1556.74,645.75 1562.91,643.54 1568.20,642.22 C1573.49,640.90 1578.34,640.24 1584.07,640.50 C1589.81,640.77 1597.30,642.49 1602.59,643.81 C1607.88,645.13 1613.62,647.67 1615.82,648.44 Z" transform="translate(0,10)" fill="#0b5e26" /><path d="M1628.39,641.83 C1625.41,640.39 1617.91,635.37 1610.53,633.23 C1603.14,631.09 1592.45,629.22 1584.07,628.99 C1575.70,628.77 1567.76,629.66 1560.26,631.90 C1552.77,634.15 1545.05,637.86 1539.10,642.49 C1533.15,647.12 1527.75,653.73 1524.55,659.68 C1521.35,665.63 1520.36,672.47 1519.92,678.20 C1519.48,683.93 1520.03,688.78 1521.90,694.07 C1523.78,699.37 1526.53,705.54 1531.16,709.95 C1535.79,714.36 1542.85,717.88 1549.68,720.53 C1556.52,723.17 1565.56,724.63 1572.17,725.82 C1578.78,727.01 1583.19,726.35 1589.37,727.67 C1595.54,728.99 1603.69,730.54 1609.21,733.76 C1614.72,736.98 1619.68,742.57 1622.43,746.98 C1625.19,751.39 1625.96,755.80 1625.74,760.21 C1625.52,764.62 1624.09,769.47 1621.11,773.44 C1618.13,777.41 1614.06,781.27 1607.88,784.02 C1601.71,786.78 1591.57,789.20 1584.07,789.97 C1576.58,790.75 1568.86,789.97 1562.91,788.65 C1556.96,787.33 1550.78,783.14 1548.36,782.04 L1533.81,789.97 C1536.46,791.30 1543.73,795.82 1549.68,797.91 C1555.63,800.00 1563.79,801.59 1569.52,802.54 C1575.26,803.49 1578.12,804.08 1584.07,803.60 C1590.03,803.11 1598.18,802.12 1605.24,799.63 C1612.29,797.14 1620.45,793.24 1626.40,788.65 C1632.35,784.07 1637.82,778.18 1640.95,772.12 C1644.08,766.05 1645.19,758.67 1645.19,752.28 C1645.19,745.88 1643.64,739.27 1640.95,733.76 C1638.26,728.25 1634.12,723.35 1629.05,719.21 C1623.98,715.06 1617.14,711.49 1610.53,708.89 C1603.92,706.29 1596.42,704.92 1589.37,703.60 C1582.31,702.28 1574.15,702.32 1568.20,700.95 C1562.25,699.59 1558.06,698.31 1553.65,695.40 C1549.24,692.49 1544.35,687.46 1541.75,683.49 C1539.14,679.52 1538.04,675.78 1538.04,671.59 C1538.04,667.40 1539.37,662.22 1541.75,658.36 C1544.13,654.50 1547.92,651.13 1552.33,648.44 C1556.74,645.75 1562.91,643.54 1568.20,642.22 C1573.49,640.90 1578.34,640.24 1584.07,640.50 C1589.81,640.77 1597.30,642.49 1602.59,643.81 C1607.88,645.13 1613.62,647.67 1615.82,648.44 Z" transform="translate(0,9)" fill="#0b5e26" /><path d="M1628.39,641.83 C1625.41,640.39 1617.91,635.37 1610.53,633.23 C1603.14,631.09 1592.45,629.22 1584.07,628.99 C1575.70,628.77 1567.76,629.66 1560.26,631.90 C1552.77,634.15 1545.05,637.86 1539.10,642.49 C1533.15,647.12 1527.75,653.73 1524.55,659.68 C1521.35,665.63 1520.36,672.47 1519.92,678.20 C1519.48,683.93 1520.03,688.78 1521.90,694.07 C1523.78,699.37 1526.53,705.54 1531.16,709.95 C1535.79,714.36 1542.85,717.88 1549.68,720.53 C1556.52,723.17 1565.56,724.63 1572.17,725.82 C1578.78,727.01 1583.19,726.35 1589.37,727.67 C1595.54,728.99 1603.69,730.54 1609.21,733.76 C1614.72,736.98 1619.68,742.57 1622.43,746.98 C1625.19,751.39 1625.96,755.80 1625.74,760.21 C1625.52,764.62 1624.09,769.47 1621.11,773.44 C1618.13,777.41 1614.06,781.27 1607.88,784.02 C1601.71,786.78 1591.57,789.20 1584.07,789.97 C1576.58,790.75 1568.86,789.97 1562.91,788.65 C1556.96,787.33 1550.78,783.14 1548.36,782.04 L1533.81,789.97 C1536.46,791.30 1543.73,795.82 1549.68,797.91 C1555.63,800.00 1563.79,801.59 1569.52,802.54 C1575.26,803.49 1578.12,804.08 1584.07,803.60 C1590.03,803.11 1598.18,802.12 1605.24,799.63 C1612.29,797.14 1620.45,793.24 1626.40,788.65 C1632.35,784.07 1637.82,778.18 1640.95,772.12 C1644.08,766.05 1645.19,758.67 1645.19,752.28 C1645.19,745.88 1643.64,739.27 1640.95,733.76 C1638.26,728.25 1634.12,723.35 1629.05,719.21 C1623.98,715.06 1617.14,711.49 1610.53,708.89 C1603.92,706.29 1596.42,704.92 1589.37,703.60 C1582.31,702.28 1574.15,702.32 1568.20,700.95 C1562.25,699.59 1558.06,698.31 1553.65,695.40 C1549.24,692.49 1544.35,687.46 1541.75,683.49 C1539.14,679.52 1538.04,675.78 1538.04,671.59 C1538.04,667.40 1539.37,662.22 1541.75,658.36 C1544.13,654.50 1547.92,651.13 1552.33,648.44 C1556.74,645.75 1562.91,643.54 1568.20,642.22 C1573.49,640.90 1578.34,640.24 1584.07,640.50 C1589.81,640.77 1597.30,642.49 1602.59,643.81 C1607.88,645.13 1613.62,647.67 1615.82,648.44 Z" transform="translate(0,8)" fill="#0b5e26" /><path d="M1628.39,641.83 C1625.41,640.39 1617.91,635.37 1610.53,633.23 C1603.14,631.09 1592.45,629.22 1584.07,628.99 C1575.70,628.77 1567.76,629.66 1560.26,631.90 C1552.77,634.15 1545.05,637.86 1539.10,642.49 C1533.15,647.12 1527.75,653.73 1524.55,659.68 C1521.35,665.63 1520.36,672.47 1519.92,678.20 C1519.48,683.93 1520.03,688.78 1521.90,694.07 C1523.78,699.37 1526.53,705.54 1531.16,709.95 C1535.79,714.36 1542.85,717.88 1549.68,720.53 C1556.52,723.17 1565.56,724.63 1572.17,725.82 C1578.78,727.01 1583.19,726.35 1589.37,727.67 C1595.54,728.99 1603.69,730.54 1609.21,733.76 C1614.72,736.98 1619.68,742.57 1622.43,746.98 C1625.19,751.39 1625.96,755.80 1625.74,760.21 C1625.52,764.62 1624.09,769.47 1621.11,773.44 C1618.13,777.41 1614.06,781.27 1607.88,784.02 C1601.71,786.78 1591.57,789.20 1584.07,789.97 C1576.58,790.75 1568.86,789.97 1562.91,788.65 C1556.96,787.33 1550.78,783.14 1548.36,782.04 L1533.81,789.97 C1536.46,791.30 1543.73,795.82 1549.68,797.91 C1555.63,800.00 1563.79,801.59 1569.52,802.54 C1575.26,803.49 1578.12,804.08 1584.07,803.60 C1590.03,803.11 1598.18,802.12 1605.24,799.63 C1612.29,797.14 1620.45,793.24 1626.40,788.65 C1632.35,784.07 1637.82,778.18 1640.95,772.12 C1644.08,766.05 1645.19,758.67 1645.19,752.28 C1645.19,745.88 1643.64,739.27 1640.95,733.76 C1638.26,728.25 1634.12,723.35 1629.05,719.21 C1623.98,715.06 1617.14,711.49 1610.53,708.89 C1603.92,706.29 1596.42,704.92 1589.37,703.60 C1582.31,702.28 1574.15,702.32 1568.20,700.95 C1562.25,699.59 1558.06,698.31 1553.65,695.40 C1549.24,692.49 1544.35,687.46 1541.75,683.49 C1539.14,679.52 1538.04,675.78 1538.04,671.59 C1538.04,667.40 1539.37,662.22 1541.75,658.36 C1544.13,654.50 1547.92,651.13 1552.33,648.44 C1556.74,645.75 1562.91,643.54 1568.20,642.22 C1573.49,640.90 1578.34,640.24 1584.07,640.50 C1589.81,640.77 1597.30,642.49 1602.59,643.81 C1607.88,645.13 1613.62,647.67 1615.82,648.44 Z" transform="translate(0,7)" fill="#0b5e26" /><path d="M1628.39,641.83 C1625.41,640.39 1617.91,635.37 1610.53,633.23 C1603.14,631.09 1592.45,629.22 1584.07,628.99 C1575.70,628.77 1567.76,629.66 1560.26,631.90 C1552.77,634.15 1545.05,637.86 1539.10,642.49 C1533.15,647.12 1527.75,653.73 1524.55,659.68 C1521.35,665.63 1520.36,672.47 1519.92,678.20 C1519.48,683.93 1520.03,688.78 1521.90,694.07 C1523.78,699.37 1526.53,705.54 1531.16,709.95 C1535.79,714.36 1542.85,717.88 1549.68,720.53 C1556.52,723.17 1565.56,724.63 1572.17,725.82 C1578.78,727.01 1583.19,726.35 1589.37,727.67 C1595.54,728.99 1603.69,730.54 1609.21,733.76 C1614.72,736.98 1619.68,742.57 1622.43,746.98 C1625.19,751.39 1625.96,755.80 1625.74,760.21 C1625.52,764.62 1624.09,769.47 1621.11,773.44 C1618.13,777.41 1614.06,781.27 1607.88,784.02 C1601.71,786.78 1591.57,789.20 1584.07,789.97 C1576.58,790.75 1568.86,789.97 1562.91,788.65 C1556.96,787.33 1550.78,783.14 1548.36,782.04 L1533.81,789.97 C1536.46,791.30 1543.73,795.82 1549.68,797.91 C1555.63,800.00 1563.79,801.59 1569.52,802.54 C1575.26,803.49 1578.12,804.08 1584.07,803.60 C1590.03,803.11 1598.18,802.12 1605.24,799.63 C1612.29,797.14 1620.45,793.24 1626.40,788.65 C1632.35,784.07 1637.82,778.18 1640.95,772.12 C1644.08,766.05 1645.19,758.67 1645.19,752.28 C1645.19,745.88 1643.64,739.27 1640.95,733.76 C1638.26,728.25 1634.12,723.35 1629.05,719.21 C1623.98,715.06 1617.14,711.49 1610.53,708.89 C1603.92,706.29 1596.42,704.92 1589.37,703.60 C1582.31,702.28 1574.15,702.32 1568.20,700.95 C1562.25,699.59 1558.06,698.31 1553.65,695.40 C1549.24,692.49 1544.35,687.46 1541.75,683.49 C1539.14,679.52 1538.04,675.78 1538.04,671.59 C1538.04,667.40 1539.37,662.22 1541.75,658.36 C1544.13,654.50 1547.92,651.13 1552.33,648.44 C1556.74,645.75 1562.91,643.54 1568.20,642.22 C1573.49,640.90 1578.34,640.24 1584.07,640.50 C1589.81,640.77 1597.30,642.49 1602.59,643.81 C1607.88,645.13 1613.62,647.67 1615.82,648.44 Z" transform="translate(0,6)" fill="#0b5e26" /><path d="M1628.39,641.83 C1625.41,640.39 1617.91,635.37 1610.53,633.23 C1603.14,631.09 1592.45,629.22 1584.07,628.99 C1575.70,628.77 1567.76,629.66 1560.26,631.90 C1552.77,634.15 1545.05,637.86 1539.10,642.49 C1533.15,647.12 1527.75,653.73 1524.55,659.68 C1521.35,665.63 1520.36,672.47 1519.92,678.20 C1519.48,683.93 1520.03,688.78 1521.90,694.07 C1523.78,699.37 1526.53,705.54 1531.16,709.95 C1535.79,714.36 1542.85,717.88 1549.68,720.53 C1556.52,723.17 1565.56,724.63 1572.17,725.82 C1578.78,727.01 1583.19,726.35 1589.37,727.67 C1595.54,728.99 1603.69,730.54 1609.21,733.76 C1614.72,736.98 1619.68,742.57 1622.43,746.98 C1625.19,751.39 1625.96,755.80 1625.74,760.21 C1625.52,764.62 1624.09,769.47 1621.11,773.44 C1618.13,777.41 1614.06,781.27 1607.88,784.02 C1601.71,786.78 1591.57,789.20 1584.07,789.97 C1576.58,790.75 1568.86,789.97 1562.91,788.65 C1556.96,787.33 1550.78,783.14 1548.36,782.04 L1533.81,789.97 C1536.46,791.30 1543.73,795.82 1549.68,797.91 C1555.63,800.00 1563.79,801.59 1569.52,802.54 C1575.26,803.49 1578.12,804.08 1584.07,803.60 C1590.03,803.11 1598.18,802.12 1605.24,799.63 C1612.29,797.14 1620.45,793.24 1626.40,788.65 C1632.35,784.07 1637.82,778.18 1640.95,772.12 C1644.08,766.05 1645.19,758.67 1645.19,752.28 C1645.19,745.88 1643.64,739.27 1640.95,733.76 C1638.26,728.25 1634.12,723.35 1629.05,719.21 C1623.98,715.06 1617.14,711.49 1610.53,708.89 C1603.92,706.29 1596.42,704.92 1589.37,703.60 C1582.31,702.28 1574.15,702.32 1568.20,700.95 C1562.25,699.59 1558.06,698.31 1553.65,695.40 C1549.24,692.49 1544.35,687.46 1541.75,683.49 C1539.14,679.52 1538.04,675.78 1538.04,671.59 C1538.04,667.40 1539.37,662.22 1541.75,658.36 C1544.13,654.50 1547.92,651.13 1552.33,648.44 C1556.74,645.75 1562.91,643.54 1568.20,642.22 C1573.49,640.90 1578.34,640.24 1584.07,640.50 C1589.81,640.77 1597.30,642.49 1602.59,643.81 C1607.88,645.13 1613.62,647.67 1615.82,648.44 Z" transform="translate(0,5)" fill="#0b5e26" /><path d="M1628.39,641.83 C1625.41,640.39 1617.91,635.37 1610.53,633.23 C1603.14,631.09 1592.45,629.22 1584.07,628.99 C1575.70,628.77 1567.76,629.66 1560.26,631.90 C1552.77,634.15 1545.05,637.86 1539.10,642.49 C1533.15,647.12 1527.75,653.73 1524.55,659.68 C1521.35,665.63 1520.36,672.47 1519.92,678.20 C1519.48,683.93 1520.03,688.78 1521.90,694.07 C1523.78,699.37 1526.53,705.54 1531.16,709.95 C1535.79,714.36 1542.85,717.88 1549.68,720.53 C1556.52,723.17 1565.56,724.63 1572.17,725.82 C1578.78,727.01 1583.19,726.35 1589.37,727.67 C1595.54,728.99 1603.69,730.54 1609.21,733.76 C1614.72,736.98 1619.68,742.57 1622.43,746.98 C1625.19,751.39 1625.96,755.80 1625.74,760.21 C1625.52,764.62 1624.09,769.47 1621.11,773.44 C1618.13,777.41 1614.06,781.27 1607.88,784.02 C1601.71,786.78 1591.57,789.20 1584.07,789.97 C1576.58,790.75 1568.86,789.97 1562.91,788.65 C1556.96,787.33 1550.78,783.14 1548.36,782.04 L1533.81,789.97 C1536.46,791.30 1543.73,795.82 1549.68,797.91 C1555.63,800.00 1563.79,801.59 1569.52,802.54 C1575.26,803.49 1578.12,804.08 1584.07,803.60 C1590.03,803.11 1598.18,802.12 1605.24,799.63 C1612.29,797.14 1620.45,793.24 1626.40,788.65 C1632.35,784.07 1637.82,778.18 1640.95,772.12 C1644.08,766.05 1645.19,758.67 1645.19,752.28 C1645.19,745.88 1643.64,739.27 1640.95,733.76 C1638.26,728.25 1634.12,723.35 1629.05,719.21 C1623.98,715.06 1617.14,711.49 1610.53,708.89 C1603.92,706.29 1596.42,704.92 1589.37,703.60 C1582.31,702.28 1574.15,702.32 1568.20,700.95 C1562.25,699.59 1558.06,698.31 1553.65,695.40 C1549.24,692.49 1544.35,687.46 1541.75,683.49 C1539.14,679.52 1538.04,675.78 1538.04,671.59 C1538.04,667.40 1539.37,662.22 1541.75,658.36 C1544.13,654.50 1547.92,651.13 1552.33,648.44 C1556.74,645.75 1562.91,643.54 1568.20,642.22 C1573.49,640.90 1578.34,640.24 1584.07,640.50 C1589.81,640.77 1597.30,642.49 1602.59,643.81 C1607.88,645.13 1613.62,647.67 1615.82,648.44 Z" transform="translate(0,4)" fill="#0b5e26" /><path d="M1628.39,641.83 C1625.41,640.39 1617.91,635.37 1610.53,633.23 C1603.14,631.09 1592.45,629.22 1584.07,628.99 C1575.70,628.77 1567.76,629.66 1560.26,631.90 C1552.77,634.15 1545.05,637.86 1539.10,642.49 C1533.15,647.12 1527.75,653.73 1524.55,659.68 C1521.35,665.63 1520.36,672.47 1519.92,678.20 C1519.48,683.93 1520.03,688.78 1521.90,694.07 C1523.78,699.37 1526.53,705.54 1531.16,709.95 C1535.79,714.36 1542.85,717.88 1549.68,720.53 C1556.52,723.17 1565.56,724.63 1572.17,725.82 C1578.78,727.01 1583.19,726.35 1589.37,727.67 C1595.54,728.99 1603.69,730.54 1609.21,733.76 C1614.72,736.98 1619.68,742.57 1622.43,746.98 C1625.19,751.39 1625.96,755.80 1625.74,760.21 C1625.52,764.62 1624.09,769.47 1621.11,773.44 C1618.13,777.41 1614.06,781.27 1607.88,784.02 C1601.71,786.78 1591.57,789.20 1584.07,789.97 C1576.58,790.75 1568.86,789.97 1562.91,788.65 C1556.96,787.33 1550.78,783.14 1548.36,782.04 L1533.81,789.97 C1536.46,791.30 1543.73,795.82 1549.68,797.91 C1555.63,800.00 1563.79,801.59 1569.52,802.54 C1575.26,803.49 1578.12,804.08 1584.07,803.60 C1590.03,803.11 1598.18,802.12 1605.24,799.63 C1612.29,797.14 1620.45,793.24 1626.40,788.65 C1632.35,784.07 1637.82,778.18 1640.95,772.12 C1644.08,766.05 1645.19,758.67 1645.19,752.28 C1645.19,745.88 1643.64,739.27 1640.95,733.76 C1638.26,728.25 1634.12,723.35 1629.05,719.21 C1623.98,715.06 1617.14,711.49 1610.53,708.89 C1603.92,706.29 1596.42,704.92 1589.37,703.60 C1582.31,702.28 1574.15,702.32 1568.20,700.95 C1562.25,699.59 1558.06,698.31 1553.65,695.40 C1549.24,692.49 1544.35,687.46 1541.75,683.49 C1539.14,679.52 1538.04,675.78 1538.04,671.59 C1538.04,667.40 1539.37,662.22 1541.75,658.36 C1544.13,654.50 1547.92,651.13 1552.33,648.44 C1556.74,645.75 1562.91,643.54 1568.20,642.22 C1573.49,640.90 1578.34,640.24 1584.07,640.50 C1589.81,640.77 1597.30,642.49 1602.59,643.81 C1607.88,645.13 1613.62,647.67 1615.82,648.44 Z" transform="translate(0,3)" fill="#0b5e26" /><path d="M1628.39,641.83 C1625.41,640.39 1617.91,635.37 1610.53,633.23 C1603.14,631.09 1592.45,629.22 1584.07,628.99 C1575.70,628.77 1567.76,629.66 1560.26,631.90 C1552.77,634.15 1545.05,637.86 1539.10,642.49 C1533.15,647.12 1527.75,653.73 1524.55,659.68 C1521.35,665.63 1520.36,672.47 1519.92,678.20 C1519.48,683.93 1520.03,688.78 1521.90,694.07 C1523.78,699.37 1526.53,705.54 1531.16,709.95 C1535.79,714.36 1542.85,717.88 1549.68,720.53 C1556.52,723.17 1565.56,724.63 1572.17,725.82 C1578.78,727.01 1583.19,726.35 1589.37,727.67 C1595.54,728.99 1603.69,730.54 1609.21,733.76 C1614.72,736.98 1619.68,742.57 1622.43,746.98 C1625.19,751.39 1625.96,755.80 1625.74,760.21 C1625.52,764.62 1624.09,769.47 1621.11,773.44 C1618.13,777.41 1614.06,781.27 1607.88,784.02 C1601.71,786.78 1591.57,789.20 1584.07,789.97 C1576.58,790.75 1568.86,789.97 1562.91,788.65 C1556.96,787.33 1550.78,783.14 1548.36,782.04 L1533.81,789.97 C1536.46,791.30 1543.73,795.82 1549.68,797.91 C1555.63,800.00 1563.79,801.59 1569.52,802.54 C1575.26,803.49 1578.12,804.08 1584.07,803.60 C1590.03,803.11 1598.18,802.12 1605.24,799.63 C1612.29,797.14 1620.45,793.24 1626.40,788.65 C1632.35,784.07 1637.82,778.18 1640.95,772.12 C1644.08,766.05 1645.19,758.67 1645.19,752.28 C1645.19,745.88 1643.64,739.27 1640.95,733.76 C1638.26,728.25 1634.12,723.35 1629.05,719.21 C1623.98,715.06 1617.14,711.49 1610.53,708.89 C1603.92,706.29 1596.42,704.92 1589.37,703.60 C1582.31,702.28 1574.15,702.32 1568.20,700.95 C1562.25,699.59 1558.06,698.31 1553.65,695.40 C1549.24,692.49 1544.35,687.46 1541.75,683.49 C1539.14,679.52 1538.04,675.78 1538.04,671.59 C1538.04,667.40 1539.37,662.22 1541.75,658.36 C1544.13,654.50 1547.92,651.13 1552.33,648.44 C1556.74,645.75 1562.91,643.54 1568.20,642.22 C1573.49,640.90 1578.34,640.24 1584.07,640.50 C1589.81,640.77 1597.30,642.49 1602.59,643.81 C1607.88,645.13 1613.62,647.67 1615.82,648.44 Z" transform="translate(0,2)" fill="#0b5e26" /><path d="M1628.39,641.83 C1625.41,640.39 1617.91,635.37 1610.53,633.23 C1603.14,631.09 1592.45,629.22 1584.07,628.99 C1575.70,628.77 1567.76,629.66 1560.26,631.90 C1552.77,634.15 1545.05,637.86 1539.10,642.49 C1533.15,647.12 1527.75,653.73 1524.55,659.68 C1521.35,665.63 1520.36,672.47 1519.92,678.20 C1519.48,683.93 1520.03,688.78 1521.90,694.07 C1523.78,699.37 1526.53,705.54 1531.16,709.95 C1535.79,714.36 1542.85,717.88 1549.68,720.53 C1556.52,723.17 1565.56,724.63 1572.17,725.82 C1578.78,727.01 1583.19,726.35 1589.37,727.67 C1595.54,728.99 1603.69,730.54 1609.21,733.76 C1614.72,736.98 1619.68,742.57 1622.43,746.98 C1625.19,751.39 1625.96,755.80 1625.74,760.21 C1625.52,764.62 1624.09,769.47 1621.11,773.44 C1618.13,777.41 1614.06,781.27 1607.88,784.02 C1601.71,786.78 1591.57,789.20 1584.07,789.97 C1576.58,790.75 1568.86,789.97 1562.91,788.65 C1556.96,787.33 1550.78,783.14 1548.36,782.04 L1533.81,789.97 C1536.46,791.30 1543.73,795.82 1549.68,797.91 C1555.63,800.00 1563.79,801.59 1569.52,802.54 C1575.26,803.49 1578.12,804.08 1584.07,803.60 C1590.03,803.11 1598.18,802.12 1605.24,799.63 C1612.29,797.14 1620.45,793.24 1626.40,788.65 C1632.35,784.07 1637.82,778.18 1640.95,772.12 C1644.08,766.05 1645.19,758.67 1645.19,752.28 C1645.19,745.88 1643.64,739.27 1640.95,733.76 C1638.26,728.25 1634.12,723.35 1629.05,719.21 C1623.98,715.06 1617.14,711.49 1610.53,708.89 C1603.92,706.29 1596.42,704.92 1589.37,703.60 C1582.31,702.28 1574.15,702.32 1568.20,700.95 C1562.25,699.59 1558.06,698.31 1553.65,695.40 C1549.24,692.49 1544.35,687.46 1541.75,683.49 C1539.14,679.52 1538.04,675.78 1538.04,671.59 C1538.04,667.40 1539.37,662.22 1541.75,658.36 C1544.13,654.50 1547.92,651.13 1552.33,648.44 C1556.74,645.75 1562.91,643.54 1568.20,642.22 C1573.49,640.90 1578.34,640.24 1584.07,640.50 C1589.81,640.77 1597.30,642.49 1602.59,643.81 C1607.88,645.13 1613.62,647.67 1615.82,648.44 Z" transform="translate(0,1)" fill="#0b5e26" /><path d="M1628.39,641.83 C1625.41,640.39 1617.91,635.37 1610.53,633.23 C1603.14,631.09 1592.45,629.22 1584.07,628.99 C1575.70,628.77 1567.76,629.66 1560.26,631.90 C1552.77,634.15 1545.05,637.86 1539.10,642.49 C1533.15,647.12 1527.75,653.73 1524.55,659.68 C1521.35,665.63 1520.36,672.47 1519.92,678.20 C1519.48,683.93 1520.03,688.78 1521.90,694.07 C1523.78,699.37 1526.53,705.54 1531.16,709.95 C1535.79,714.36 1542.85,717.88 1549.68,720.53 C1556.52,723.17 1565.56,724.63 1572.17,725.82 C1578.78,727.01 1583.19,726.35 1589.37,727.67 C1595.54,728.99 1603.69,730.54 1609.21,733.76 C1614.72,736.98 1619.68,742.57 1622.43,746.98 C1625.19,751.39 1625.96,755.80 1625.74,760.21 C1625.52,764.62 1624.09,769.47 1621.11,773.44 C1618.13,777.41 1614.06,781.27 1607.88,784.02 C1601.71,786.78 1591.57,789.20 1584.07,789.97 C1576.58,790.75 1568.86,789.97 1562.91,788.65 C1556.96,787.33 1550.78,783.14 1548.36,782.04 L1533.81,789.97 C1536.46,791.30 1543.73,795.82 1549.68,797.91 C1555.63,800.00 1563.79,801.59 1569.52,802.54 C1575.26,803.49 1578.12,804.08 1584.07,803.60 C1590.03,803.11 1598.18,802.12 1605.24,799.63 C1612.29,797.14 1620.45,793.24 1626.40,788.65 C1632.35,784.07 1637.82,778.18 1640.95,772.12 C1644.08,766.05 1645.19,758.67 1645.19,752.28 C1645.19,745.88 1643.64,739.27 1640.95,733.76 C1638.26,728.25 1634.12,723.35 1629.05,719.21 C1623.98,715.06 1617.14,711.49 1610.53,708.89 C1603.92,706.29 1596.42,704.92 1589.37,703.60 C1582.31,702.28 1574.15,702.32 1568.20,700.95 C1562.25,699.59 1558.06,698.31 1553.65,695.40 C1549.24,692.49 1544.35,687.46 1541.75,683.49 C1539.14,679.52 1538.04,675.78 1538.04,671.59 C1538.04,667.40 1539.37,662.22 1541.75,658.36 C1544.13,654.50 1547.92,651.13 1552.33,648.44 C1556.74,645.75 1562.91,643.54 1568.20,642.22 C1573.49,640.90 1578.34,640.24 1584.07,640.50 C1589.81,640.77 1597.30,642.49 1602.59,643.81 C1607.88,645.13 1613.62,647.67 1615.82,648.44 Z" transform="translate(0,0)" fill="#1caa43" /><polygon points="1392.30,853.60 1397.90,852.90 1469.30,947.30 1557.40,845.70 1637.70,947.30 1715.80,852.90 1720.70,853.60 1720.70,879.20 1637.70,981.90 1554.00,880.30 1468.10,981.90 1392.30,878.10" transform="translate(0,11)" fill="#0a6428" /><polygon points="1392.30,853.60 1397.90,852.90 1469.30,947.30 1557.40,845.70 1637.70,947.30 1715.80,852.90 1720.70,853.60 1720.70,879.20 1637.70,981.90 1554.00,880.30 1468.10,981.90 1392.30,878.10" transform="translate(0,10)" fill="#0a6428" /><polygon points="1392.30,853.60 1397.90,852.90 1469.30,947.30 1557.40,845.70 1637.70,947.30 1715.80,852.90 1720.70,853.60 1720.70,879.20 1637.70,981.90 1554.00,880.30 1468.10,981.90 1392.30,878.10" transform="translate(0,9)" fill="#0a6428" /><polygon points="1392.30,853.60 1397.90,852.90 1469.30,947.30 1557.40,845.70 1637.70,947.30 1715.80,852.90 1720.70,853.60 1720.70,879.20 1637.70,981.90 1554.00,880.30 1468.10,981.90 1392.30,878.10" transform="translate(0,8)" fill="#0a6428" /><polygon points="1392.30,853.60 1397.90,852.90 1469.30,947.30 1557.40,845.70 1637.70,947.30 1715.80,852.90 1720.70,853.60 1720.70,879.20 1637.70,981.90 1554.00,880.30 1468.10,981.90 1392.30,878.10" transform="translate(0,7)" fill="#0a6428" /><polygon points="1392.30,853.60 1397.90,852.90 1469.30,947.30 1557.40,845.70 1637.70,947.30 1715.80,852.90 1720.70,853.60 1720.70,879.20 1637.70,981.90 1554.00,880.30 1468.10,981.90 1392.30,878.10" transform="translate(0,6)" fill="#0a6428" /><polygon points="1392.30,853.60 1397.90,852.90 1469.30,947.30 1557.40,845.70 1637.70,947.30 1715.80,852.90 1720.70,853.60 1720.70,879.20 1637.70,981.90 1554.00,880.30 1468.10,981.90 1392.30,878.10" transform="translate(0,5)" fill="#0a6428" /><polygon points="1392.30,853.60 1397.90,852.90 1469.30,947.30 1557.40,845.70 1637.70,947.30 1715.80,852.90 1720.70,853.60 1720.70,879.20 1637.70,981.90 1554.00,880.30 1468.10,981.90 1392.30,878.10" transform="translate(0,4)" fill="#0a6428" /><polygon points="1392.30,853.60 1397.90,852.90 1469.30,947.30 1557.40,845.70 1637.70,947.30 1715.80,852.90 1720.70,853.60 1720.70,879.20 1637.70,981.90 1554.00,880.30 1468.10,981.90 1392.30,878.10" transform="translate(0,3)" fill="#0a6428" /><polygon points="1392.30,853.60 1397.90,852.90 1469.30,947.30 1557.40,845.70 1637.70,947.30 1715.80,852.90 1720.70,853.60 1720.70,879.20 1637.70,981.90 1554.00,880.30 1468.10,981.90 1392.30,878.10" transform="translate(0,2)" fill="#0a6428" /><polygon points="1392.30,853.60 1397.90,852.90 1469.30,947.30 1557.40,845.70 1637.70,947.30 1715.80,852.90 1720.70,853.60 1720.70,879.20 1637.70,981.90 1554.00,880.30 1468.10,981.90 1392.30,878.10" transform="translate(0,1)" fill="#0a6428" /><polygon points="1392.30,853.60 1397.90,852.90 1469.30,947.30 1557.40,845.70 1637.70,947.30 1715.80,852.90 1720.70,853.60 1720.70,879.20 1637.70,981.90 1554.00,880.30 1468.10,981.90 1392.30,878.10" transform="translate(0,0)" fill="#1caa43" /><polygon points="1780.50,814.50 1798.40,814.50 1801.20,886.00 1874.90,886.00 1873.80,814.50 1891.60,814.50 1898.80,977.40 1879.40,977.40 1876.50,901.50 1801.90,901.50 1802.40,977.40 1782.80,977.40" transform="translate(0,11)" fill="#0a5e26" /><polygon points="1780.50,814.50 1798.40,814.50 1801.20,886.00 1874.90,886.00 1873.80,814.50 1891.60,814.50 1898.80,977.40 1879.40,977.40 1876.50,901.50 1801.90,901.50 1802.40,977.40 1782.80,977.40" transform="translate(0,10)" fill="#0a5e26" /><polygon points="1780.50,814.50 1798.40,814.50 1801.20,886.00 1874.90,886.00 1873.80,814.50 1891.60,814.50 1898.80,977.40 1879.40,977.40 1876.50,901.50 1801.90,901.50 1802.40,977.40 1782.80,977.40" transform="translate(0,9)" fill="#0a5e26" /><polygon points="1780.50,814.50 1798.40,814.50 1801.20,886.00 1874.90,886.00 1873.80,814.50 1891.60,814.50 1898.80,977.40 1879.40,977.40 1876.50,901.50 1801.90,901.50 1802.40,977.40 1782.80,977.40" transform="translate(0,8)" fill="#0a5e26" /><polygon points="1780.50,814.50 1798.40,814.50 1801.20,886.00 1874.90,886.00 1873.80,814.50 1891.60,814.50 1898.80,977.40 1879.40,977.40 1876.50,901.50 1801.90,901.50 1802.40,977.40 1782.80,977.40" transform="translate(0,7)" fill="#0a5e26" /><polygon points="1780.50,814.50 1798.40,814.50 1801.20,886.00 1874.90,886.00 1873.80,814.50 1891.60,814.50 1898.80,977.40 1879.40,977.40 1876.50,901.50 1801.90,901.50 1802.40,977.40 1782.80,977.40" transform="translate(0,6)" fill="#0a5e26" /><polygon points="1780.50,814.50 1798.40,814.50 1801.20,886.00 1874.90,886.00 1873.80,814.50 1891.60,814.50 1898.80,977.40 1879.40,977.40 1876.50,901.50 1801.90,901.50 1802.40,977.40 1782.80,977.40" transform="translate(0,5)" fill="#0a5e26" /><polygon points="1780.50,814.50 1798.40,814.50 1801.20,886.00 1874.90,886.00 1873.80,814.50 1891.60,814.50 1898.80,977.40 1879.40,977.40 1876.50,901.50 1801.90,901.50 1802.40,977.40 1782.80,977.40" transform="translate(0,4)" fill="#0a5e26" /><polygon points="1780.50,814.50 1798.40,814.50 1801.20,886.00 1874.90,886.00 1873.80,814.50 1891.60,814.50 1898.80,977.40 1879.40,977.40 1876.50,901.50 1801.90,901.50 1802.40,977.40 1782.80,977.40" transform="translate(0,3)" fill="#0a5e26" /><polygon points="1780.50,814.50 1798.40,814.50 1801.20,886.00 1874.90,886.00 1873.80,814.50 1891.60,814.50 1898.80,977.40 1879.40,977.40 1876.50,901.50 1801.90,901.50 1802.40,977.40 1782.80,977.40" transform="translate(0,2)" fill="#0a5e26" /><polygon points="1780.50,814.50 1798.40,814.50 1801.20,886.00 1874.90,886.00 1873.80,814.50 1891.60,814.50 1898.80,977.40 1879.40,977.40 1876.50,901.50 1801.90,901.50 1802.40,977.40 1782.80,977.40" transform="translate(0,1)" fill="#0a5e26" /><polygon points="1780.50,814.50 1798.40,814.50 1801.20,886.00 1874.90,886.00 1873.80,814.50 1891.60,814.50 1898.80,977.40 1879.40,977.40 1876.50,901.50 1801.90,901.50 1802.40,977.40 1782.80,977.40" transform="translate(0,0)" fill="#1caa43" /><polygon points="1723.23,673.23 1744.39,673.23 1744.39,715.03 1834.87,680.11 1842.28,681.69 1845.24,685.40 1845.45,693.86 1745.45,735.13 1848.62,778.52 1848.62,788.57 1839.10,791.22 1744.92,753.65 1744.39,798.10 1723.23,798.10" transform="translate(0,0)" fill="#ffffff" stroke="#ffffff" stroke-width="7" stroke-linejoin="round"/><polygon points="1723.23,673.23 1744.39,673.23 1744.39,715.03 1834.87,680.11 1842.28,681.69 1845.24,685.40 1845.45,693.86 1745.45,735.13 1848.62,778.52 1848.62,788.57 1839.10,791.22 1744.92,753.65 1744.39,798.10 1723.23,798.10" transform="translate(0,2)" fill="#ffffff" stroke="#ffffff" stroke-width="7" stroke-linejoin="round"/><polygon points="1723.23,673.23 1744.39,673.23 1744.39,715.03 1834.87,680.11 1842.28,681.69 1845.24,685.40 1845.45,693.86 1745.45,735.13 1848.62,778.52 1848.62,788.57 1839.10,791.22 1744.92,753.65 1744.39,798.10 1723.23,798.10" transform="translate(0,4)" fill="#ffffff" stroke="#ffffff" stroke-width="7" stroke-linejoin="round"/><polygon points="1723.23,673.23 1744.39,673.23 1744.39,715.03 1834.87,680.11 1842.28,681.69 1845.24,685.40 1845.45,693.86 1745.45,735.13 1848.62,778.52 1848.62,788.57 1839.10,791.22 1744.92,753.65 1744.39,798.10 1723.23,798.10" transform="translate(0,6)" fill="#ffffff" stroke="#ffffff" stroke-width="7" stroke-linejoin="round"/><polygon points="1723.23,673.23 1744.39,673.23 1744.39,715.03 1834.87,680.11 1842.28,681.69 1845.24,685.40 1845.45,693.86 1745.45,735.13 1848.62,778.52 1848.62,788.57 1839.10,791.22 1744.92,753.65 1744.39,798.10 1723.23,798.10" transform="translate(0,8)" fill="#ffffff" stroke="#ffffff" stroke-width="7" stroke-linejoin="round"/><polygon points="1723.23,673.23 1744.39,673.23 1744.39,715.03 1834.87,680.11 1842.28,681.69 1845.24,685.40 1845.45,693.86 1745.45,735.13 1848.62,778.52 1848.62,788.57 1839.10,791.22 1744.92,753.65 1744.39,798.10 1723.23,798.10" transform="translate(0,10)" fill="#ffffff" stroke="#ffffff" stroke-width="7" stroke-linejoin="round"/><polygon points="1723.23,673.23 1744.39,673.23 1744.39,715.03 1834.87,680.11 1842.28,681.69 1845.24,685.40 1845.45,693.86 1745.45,735.13 1848.62,778.52 1848.62,788.57 1839.10,791.22 1744.92,753.65 1744.39,798.10 1723.23,798.10" transform="translate(0,11)" fill="#255c3d" /><polygon points="1723.23,673.23 1744.39,673.23 1744.39,715.03 1834.87,680.11 1842.28,681.69 1845.24,685.40 1845.45,693.86 1745.45,735.13 1848.62,778.52 1848.62,788.57 1839.10,791.22 1744.92,753.65 1744.39,798.10 1723.23,798.10" transform="translate(0,10)" fill="#255c3d" /><polygon points="1723.23,673.23 1744.39,673.23 1744.39,715.03 1834.87,680.11 1842.28,681.69 1845.24,685.40 1845.45,693.86 1745.45,735.13 1848.62,778.52 1848.62,788.57 1839.10,791.22 1744.92,753.65 1744.39,798.10 1723.23,798.10" transform="translate(0,9)" fill="#255c3d" /><polygon points="1723.23,673.23 1744.39,673.23 1744.39,715.03 1834.87,680.11 1842.28,681.69 1845.24,685.40 1845.45,693.86 1745.45,735.13 1848.62,778.52 1848.62,788.57 1839.10,791.22 1744.92,753.65 1744.39,798.10 1723.23,798.10" transform="translate(0,8)" fill="#255c3d" /><polygon points="1723.23,673.23 1744.39,673.23 1744.39,715.03 1834.87,680.11 1842.28,681.69 1845.24,685.40 1845.45,693.86 1745.45,735.13 1848.62,778.52 1848.62,788.57 1839.10,791.22 1744.92,753.65 1744.39,798.10 1723.23,798.10" transform="translate(0,7)" fill="#255c3d" /><polygon points="1723.23,673.23 1744.39,673.23 1744.39,715.03 1834.87,680.11 1842.28,681.69 1845.24,685.40 1845.45,693.86 1745.45,735.13 1848.62,778.52 1848.62,788.57 1839.10,791.22 1744.92,753.65 1744.39,798.10 1723.23,798.10" transform="translate(0,6)" fill="#255c3d" /><polygon points="1723.23,673.23 1744.39,673.23 1744.39,715.03 1834.87,680.11 1842.28,681.69 1845.24,685.40 1845.45,693.86 1745.45,735.13 1848.62,778.52 1848.62,788.57 1839.10,791.22 1744.92,753.65 1744.39,798.10 1723.23,798.10" transform="translate(0,5)" fill="#255c3d" /><polygon points="1723.23,673.23 1744.39,673.23 1744.39,715.03 1834.87,680.11 1842.28,681.69 1845.24,685.40 1845.45,693.86 1745.45,735.13 1848.62,778.52 1848.62,788.57 1839.10,791.22 1744.92,753.65 1744.39,798.10 1723.23,798.10" transform="translate(0,4)" fill="#255c3d" /><polygon points="1723.23,673.23 1744.39,673.23 1744.39,715.03 1834.87,680.11 1842.28,681.69 1845.24,685.40 1845.45,693.86 1745.45,735.13 1848.62,778.52 1848.62,788.57 1839.10,791.22 1744.92,753.65 1744.39,798.10 1723.23,798.10" transform="translate(0,3)" fill="#255c3d" /><polygon points="1723.23,673.23 1744.39,673.23 1744.39,715.03 1834.87,680.11 1842.28,681.69 1845.24,685.40 1845.45,693.86 1745.45,735.13 1848.62,778.52 1848.62,788.57 1839.10,791.22 1744.92,753.65 1744.39,798.10 1723.23,798.10" transform="translate(0,2)" fill="#255c3d" /><polygon points="1723.23,673.23 1744.39,673.23 1744.39,715.03 1834.87,680.11 1842.28,681.69 1845.24,685.40 1845.45,693.86 1745.45,735.13 1848.62,778.52 1848.62,788.57 1839.10,791.22 1744.92,753.65 1744.39,798.10 1723.23,798.10" transform="translate(0,1)" fill="#255c3d" /><polygon points="1723.23,673.23 1744.39,673.23 1744.39,715.03 1834.87,680.11 1842.28,681.69 1845.24,685.40 1845.45,693.86 1745.45,735.13 1848.62,778.52 1848.62,788.57 1839.10,791.22 1744.92,753.65 1744.39,798.10 1723.23,798.10" transform="translate(0,0)" fill="#27914f" /><ellipse cx="1774.7" cy="729" rx="300" ry="217.5" fill="none" stroke="#2cec2c" stroke-width="1.7"/><ellipse cx="1774" cy="750.6" rx="300.5" ry="207.7" fill="none" stroke="#1f1fee" stroke-width="1.7"/><ellipse cx="1774.8" cy="739.5" rx="5" ry="300.5" fill="none" stroke="#f21212" stroke-width="1.8"/><path d="M1777.7,470 L1774.6,740.5" stroke="#22e022" stroke-width="1.8"/><path d="M1775,740.5 H2112" stroke="#1f1fee" stroke-width="2.2"/><defs><linearGradient id="gc" x1="0" y1="0" x2="0" y2="1"><stop offset="0" stop-color="#2ef02e"/><stop offset="1" stop-color="#0f8a14"/></linearGradient><linearGradient id="rc" x1="0" y1="0" x2="1" y2="0"><stop offset="0" stop-color="#9a0000"/><stop offset="0.5" stop-color="#f01515"/><stop offset="1" stop-color="#a00000"/></linearGradient><linearGradient id="bc" x1="0" y1="0" x2="1" y2="0"><stop offset="0" stop-color="#0000a0"/><stop offset="0.5" stop-color="#2030ff"/><stop offset="1" stop-color="#0000b0"/></linearGradient></defs><polygon points="1723,475 1760,466 1760,484.6" fill="url(#gc)"/><polygon points="1834,475 1797.5,466 1797.5,484.6" fill="url(#gc)"/><rect x="1770" y="464" width="17" height="11" fill="#28e028"/><rect x="1770" y="475" width="17" height="12" fill="#15991b"/><polygon points="1778.3,956 1770,981 1789,981" fill="url(#rc)"/><rect x="1769.5" y="981" width="20" height="8" fill="#f01010"/><rect x="1769.5" y="989" width="20" height="12" fill="#990000"/><rect x="1769.5" y="1001" width="20" height="10" fill="#ee1515"/><polygon points="1769.5,1011 1789.5,1011 1779.4,1030" fill="#7a0000"/><polygon points="2117,706 2108.5,727 2126.5,727" fill="url(#bc)"/><rect x="2108.5" y="727" width="18" height="7" fill="#000090"/><rect x="2108.5" y="734" width="18" height="12" fill="#1f2ff0"/><rect x="2108.5" y="746" width="18" height="6" fill="#000090"/><polygon points="2108.5,752 2126.5,752 2118,775" fill="#1020e0"/><path d="M1126,1248.6 H1243" stroke="#d2000e" stroke-width="4"/><polygon points="1241.5,1242.8 1264.5,1248.6 1241.5,1254" fill="#c8000c"/><path d="M1126,1248 L1137.6,1160" stroke="#18b818" stroke-width="3.6"/><polygon points="1139.3,1143.6 1131.5,1161 1143.6,1162" fill="#149f14"/><path d="M1126,1248 L1115,1174" stroke="#00008c" stroke-width="3.8"/><polygon points="1112.8,1157.7 1108.2,1176 1121.3,1174" fill="#0000a8"/><polygon points="2210.70,501.70 2265.30,501.70 2270.20,537.40 2214.30,537.40" fill="#e9e9e9" stroke="#6a6a6a" stroke-width="2.4" stroke-linejoin="round"/><polygon points="2216.70,554.80 2273.20,554.80 2278.60,591.00 2221.00,591.00" fill="#e9e9e9" stroke="#6a6a6a" stroke-width="2.4" stroke-linejoin="round"/><polygon points="2224.60,608.40 2281.20,608.40 2286.10,646.10 2228.60,646.10" fill="#e9e9e9" stroke="#6a6a6a" stroke-width="2.4" stroke-linejoin="round"/><polygon points="2231.50,664.00 2289.00,664.00 2294.40,703.00 2236.00,703.00" fill="#e9e9e9" stroke="#6a6a6a" stroke-width="2.4" stroke-linejoin="round"/><polygon points="2237.50,720.30 2299.00,720.30 2305.40,763.00 2240.00,763.00" fill="#e9e9e9" stroke="#6a6a6a" stroke-width="2.4" stroke-linejoin="round"/><path d="M2224,509 L2259,530 M2258,509 L2224,530" stroke="#5a5a5a" stroke-width="2.4"/><path d="M2245,562 L2268,566 L2265,579 L2241,575 Z" fill="none" stroke="#6a6a6a" stroke-width="1.8"/><rect x="2230" y="583" width="41" height="4" rx="2" fill="none" stroke="#6a6a6a" stroke-width="1.6"/><text x="2222" y="566" font-family="Liberation Sans" font-weight="bold" font-size="6" fill="#777">AUTO</text><path d="M2227,577 L2236,569 M2229,575 L2236,572" stroke="#666" stroke-width="2"/><path d="M2235,614 H2272 L2273,622 H2236 Z M2237,625 H2247 L2248,641 H2238 Z M2252,626 H2273 L2274,632 H2253 Z M2253,636 H2274 L2275,642 H2254 Z" fill="none" stroke="#6a6a6a" stroke-width="1.8"/><path d="M2250,689 V681 C2250,673 2264,673 2266,680" fill="none" stroke="#555" stroke-width="3.5"/><rect x="2248" y="684" width="31" height="14" rx="2" fill="#555"/><polygon points="2252,729 2281,729 2290,742 2281,754 2252,754 2244,742" fill="#d6d6d6" stroke="#666" stroke-width="2"/><ellipse cx="2267" cy="742" rx="9" ry="6" fill="none" stroke="#666" stroke-width="2"/><text x="2306" y="1232" font-family="Liberation Sans" font-weight="bold" font-size="39" fill="#1caa43" textLength="51" lengthAdjust="spacingAndGlyphs" transform="translate(2306,1232) skewX(-4) translate(-2306,-1232)">01</text><path d="M1252,458 L1274,444.5 C1279,442 1282,446 1278,449.5 L1256,459.5 H1251.5 Z" fill="none" stroke="#1dab4b" stroke-width="2.6" stroke-linejoin="round"/><path d="M1248,464 H1281.5" stroke="#1dab4b" stroke-width="2.2" stroke-linecap="round"/></svg>
<div class="a" style="left:858px;top:72px;width:40px;height:40px;background:#f8f8f8;"></div>
<svg class="a" style="left:858px;top:72px;" width="40" height="40" viewBox="0 0 40 40"><path d="M15,13 L10,20 L15,27 M25,13 L30,20 L25,27" fill="none" stroke="#2b3234" stroke-width="1.8"/><path d="M20,9 V30" stroke="#2b3234" stroke-width="2"/></svg>
<div class="a" style="left:947px;top:72px;width:1604px;height:100px;background:#f9f9f9;"></div>
<svg class="a" style="left:950px;top:80px;" width="90" height="80" viewBox="0 0 90 80"><path d="M8.2,27.7 H49.5 V69.7 H8.2 Z M8.2,27.7 L27.7,8.2 H69.3 L49.5,27.7 M69.3,8.2 V49.6 M49.5,69.7 L55,64.5" fill="none" stroke="#2b3234" stroke-width="2" stroke-linejoin="round"/><circle cx="68.7" cy="54.5" r="14.3" fill="#f9f9f9" stroke="#2b3234" stroke-width="2"/><path d="M68.7,45.5 V63.5 M59.7,54.5 H77.7" stroke="#2b3234" stroke-width="2"/></svg>
<svg class="a" style="left:1045px;top:80px;" width="80" height="80" viewBox="0 0 80 80"><path d="M5.50,9.8 V67.3 M17.04,9.8 V67.3 M28.58,9.8 V67.3 M40.12,9.8 V67.3 M51.66,9.8 V67.3 M63.20,9.8 V67.3 M5.5,9.80 H63.2 M5.5,21.30 H63.2 M5.5,32.80 H63.2 M5.5,44.30 H63.2 M5.5,55.80 H63.2 M5.5,67.30 H63.2 " fill="none" stroke="#2b3234" stroke-width="1.9"/><circle cx="57.6" cy="58.4" r="14.3" fill="#f9f9f9" stroke="#2b3234" stroke-width="2"/><path d="M57.6,49.4 V67.4 M48.6,58.4 H66.6" stroke="#2b3234" stroke-width="2"/></svg>
<svg class="a" style="left:1135px;top:80px;" width="80" height="80" viewBox="0 0 80 80"><text x="2.7" y="29.7" font-family="Liberation Sans" font-weight="bold" font-size="11" fill="#2b3234" textLength="26.4" lengthAdjust="spacingAndGlyphs">AUTO</text><path d="M35.1,10.2 L72.2,20.7 L61.8,56.4 L25.5,46.1 Z" fill="none" stroke="#2b3234" stroke-width="2"/><path d="M23.2,37.6 Q17,40 14.5,46" fill="none" stroke="#2b3234" stroke-width="2"/><path d="M4.3,44.5 L21.6,49.1 L9.3,61 Z" fill="none" stroke="#2b3234" stroke-width="2" stroke-linejoin="round"/><rect x="10.3" y="65.8" width="59.1" height="7.1" rx="3.5" fill="none" stroke="#2b3234" stroke-width="2"/></svg>
<svg class="a" style="left:1225px;top:80px;" width="70" height="80" viewBox="0 0 70 80"><rect x="4" y="11" width="62" height="62" fill="none" stroke="#2b3234" stroke-width="2"/><rect x="11" y="17" width="47" height="17" fill="none" stroke="#2b3234" stroke-width="2"/><rect x="11" y="39" width="14" height="27" fill="none" stroke="#2b3234" stroke-width="2"/><rect x="30" y="39" width="28" height="11" fill="none" stroke="#2b3234" stroke-width="2"/><rect x="30" y="55" width="28" height="11" fill="none" stroke="#2b3234" stroke-width="2"/></svg>
<svg class="a" style="left:1315px;top:80px;" width="66" height="80" viewBox="0 0 66 80"><rect x="5" y="17" width="55" height="3" rx="1.5" fill="#2b3234"/><rect x="5" y="24.5" width="55" height="4.5" rx="1.5" fill="none" stroke="#2b3234" stroke-width="1.8"/><rect x="5" y="34.5" width="55" height="6" rx="1.5" fill="none" stroke="#2b3234" stroke-width="1.8"/><rect x="5" y="45.5" width="55" height="7" rx="1.5" fill="none" stroke="#2b3234" stroke-width="1.8"/><rect x="5" y="58.5" width="55" height="9" rx="1.5" fill="none" stroke="#2b3234" stroke-width="1.8"/></svg>
<div class="a" style="left:1412px;top:91px;width:2px;height:62px;background:#777;"></div>
<svg class="a" style="left:1445px;top:80px;" width="80" height="80" viewBox="0 0 80 80"><path d="M40,8 L28,20 H35 V29 H45 V20 H52 Z M40,76 L28,64 H35 V55 H45 V64 H52 Z M5,42 L17,30 V37 H26 V47 H17 V54 Z M73,42 L61,30 V37 H52 V47 H61 V54 Z" fill="none" stroke="#2b3234" stroke-width="1.9" stroke-linejoin="round"/><rect x="35" y="37" width="10" height="10" rx="1.5" fill="none" stroke="#2b3234" stroke-width="1.9"/></svg>
<svg class="a" style="left:1530px;top:80px;" width="84" height="84" viewBox="0 0 84 84"><path d="M13,53 C8,30 22,12 40,10.8 C48,10.3 54,14 60,20" fill="none" stroke="#1dab4b" stroke-width="1.8"/><path d="M52.6,29.3 L68.5,14.8 L74.5,35.2 Z" fill="none" stroke="#1dab4b" stroke-width="1.8" stroke-linejoin="round"/><path d="M41.3,27.3 L65.5,51.5 L41.3,75.7 L17.9,51.5 Z" fill="none" stroke="#2b3234" stroke-width="2"/></svg>
<div class="a" style="left:1527px;top:77px;width:89px;height:89px;border:6px solid #f4271c;"></div>
<svg class="a" style="left:1625px;top:80px;" width="70" height="80" viewBox="0 0 70 80"><path d="M4,10 H66 V73 H4 Z" fill="none" stroke="#2b3234" stroke-width="2" stroke-dasharray="5,5"/><rect x="4" y="39" width="34" height="34" fill="#f9f9f9" stroke="#2b3234" stroke-width="2"/><path d="M52,26 L45,33 L48,36 L55,29 L58,32 V18 H44 L47,21 Z" fill="none" stroke="#2b3234" stroke-width="1.8" stroke-linejoin="round"/></svg>
<svg class="a" style="left:1712px;top:80px;" width="76" height="80" viewBox="0 0 76 80"><path d="M35,11 L73,21 L63,57 L26,46 Z" fill="none" stroke="#2b3234" stroke-width="2"/><path d="M29,36 Q18,40 16,50" fill="none" stroke="#2b3234" stroke-width="2"/><path d="M4,45 L19,53 L9,67 Z" fill="none" stroke="#2b3234" stroke-width="2" stroke-linejoin="round"/><rect x="10" y="70" width="62" height="6" rx="3" fill="none" stroke="#2b3234" stroke-width="2"/></svg>
<svg class="a" style="left:1803px;top:80px;" width="66" height="80" viewBox="0 0 66 80"><rect x="4" y="11" width="58" height="27" fill="none" stroke="#2b3234" stroke-width="2"/><rect x="4" y="47" width="58" height="26" fill="none" stroke="#2b3234" stroke-width="2"/><path d="M4,42.5 H62" stroke="#2b3234" stroke-width="1.8" stroke-dasharray="2.5,2"/></svg>
<svg class="a" style="left:1888px;top:80px;" width="76" height="80" viewBox="0 0 76 80"><rect x="24" y="10" width="43" height="43" fill="none" stroke="#c8c8c8" stroke-width="2"/><rect x="4" y="28" width="43" height="44" fill="none" stroke="#c8c8c8" stroke-width="2"/><rect x="24" y="28" width="23" height="25" fill="none" stroke="#c8c8c8" stroke-width="2"/><path d="M26,40 L36,30 M26,47 L43,30 M30,51 L45,36 M37,51 L45,43" stroke="#c8c8c8" stroke-width="1"/></svg>
<svg class="a" style="left:1980px;top:80px;" width="72" height="80" viewBox="0 0 72 80"><path d="M28,13 L58,24 L53,38 L23,27 Z" fill="none" stroke="#c8c8c8" stroke-width="2"/><path d="M20,28 Q12,32 10,40" fill="none" stroke="#c8c8c8" stroke-width="2"/><path d="M4,35 L15,39 L8,50 Z" fill="none" stroke="#c8c8c8" stroke-width="2" stroke-linejoin="round"/><rect x="20" y="40" width="31" height="12" fill="none" stroke="#c8c8c8" stroke-width="1.5" stroke-dasharray="2,2"/><rect x="6" y="55" width="58" height="18" fill="none" stroke="#c8c8c8" stroke-width="2"/></svg>
<svg class="a" style="left:2062px;top:80px;" width="80" height="80" viewBox="0 0 80 80"><path d="M35.8,11 L64,40 L32,71.5 L4.5,40 Z M4.5,40 H64" fill="none" stroke="#2b3234" stroke-width="2" stroke-linejoin="round"/><path d="M12.5,9.5 L33.5,31.5" stroke="#2b3234" stroke-width="5"/><path d="M63.8,48 C58,58 54.5,64 54.5,69 C54.5,74 58.5,76.5 64,76.5 C69.5,76.5 73.5,74 73.5,69 C73.5,64 70,58 63.8,48 Z" fill="none" stroke="#2b3234" stroke-width="2"/></svg>
<svg class="a" style="left:2155px;top:80px;" width="70" height="80" viewBox="0 0 70 80"><path d="M4,10 H52 V20 H36 V73 H19 V20 H4 Z" fill="none" stroke="#2b3234" stroke-width="2" stroke-linejoin="round"/><text x="39" y="73" font-family="Liberation Sans" font-size="36" fill="#f9f9f9" stroke="#2b3234" stroke-width="1.8">a</text></svg>
<svg class="a" style="left:2243px;top:80px;" width="70" height="80" viewBox="0 0 70 80"><path d="M4,10 H65 V73 H31 V34 H4 Z" fill="none" stroke="#2b3234" stroke-width="2"/><rect x="8" y="34" width="23" height="39" fill="#f9f9f9" stroke="#2b3234" stroke-width="2"/><path d="M8,44 L18,34 M8,54 L28,34 M8,64 L31,41 M11,73 L31,53 M21,73 L31,63" stroke="#2b3234" stroke-width="1.5"/></svg>
<svg class="a" style="left:2325px;top:96px;" width="80" height="40" viewBox="0 0 80 40"><circle cx="7.5" cy="25" r="2" fill="#2b3234"/><circle cx="20.5" cy="25" r="2" fill="#2b3234"/><circle cx="33" cy="25" r="2" fill="#2b3234"/><path d="M49,20 L59,29 L69,20" fill="none" stroke="#2b3234" stroke-width="2.2"/></svg>
<div class="a" style="left:2428px;top:91px;width:2px;height:62px;background:#777;"></div>
<svg class="a" style="left:2465px;top:80px;" width="76" height="80" viewBox="0 0 76 80"><path d="M3,22.3 H28.3 V72.9 H3 Z M3,47 H28.3 M28.3,47 H54.2 V72.9 H28.3" fill="none" stroke="#2b3234" stroke-width="2" stroke-linejoin="round"/><path d="M11.5,47 H21.5 M28.3,30 V40 M28.3,54.5 V64.5 M41,47 H51" stroke="#f9f9f9" stroke-width="3"/><path d="M11.5,47 A5,5 0 0 0 21.5,47 M28.3,30 A5,5 0 0 0 28.3,40 M28.3,54.5 A5,5 0 0 1 28.3,64.5" fill="none" stroke="#2b3234" stroke-width="2"/><path d="M49.5,6.5 L68,25 L49.5,43.5 L31,25 Z" fill="#f9f9f9" stroke="#2b3234" stroke-width="2" stroke-linejoin="round"/><path d="M36.5,19.5 L43,13 M37,31 L43.5,37.5" stroke="#f9f9f9" stroke-width="3"/><path d="M36.5,19.5 A4.6,4.6 0 0 1 43,13 M37,31 A4.6,4.6 0 0 1 43.5,37.5" fill="none" stroke="#2b3234" stroke-width="2"/><path d="M28.3,22.3 V30 M28.3,40 V47" stroke="#2b3234" stroke-width="2"/><path d="M41,47 H51" stroke="#f9f9f9" stroke-width="3"/><path d="M39.5,47 H41 A5,5 0 0 1 51,47 H54.2" fill="none" stroke="#2b3234" stroke-width="2"/></svg>
<div class="a" style="left:879px;top:190px;width:152px;height:50px;background:#adaeb0;border-radius:16px;"></div>
<svg class="a" style="left:895px;top:196px;" width="42" height="40" viewBox="0 0 42 40"><path d="M11,12 L5,6 L11,0.5 M5,6 H21 C30,6 35,12 35,19 C35,27 30,33 21,33 H15" fill="none" stroke="#e9e9e9" stroke-width="2.2" stroke-linecap="round" stroke-linejoin="round" transform="translate(1,4)"/></svg>
<div class="t" style="left:939.5px;top:199.8px;font-size:28px;color:#f4f4f4;font-weight:normal;transform:scaleX(1.0216);transform-origin:0 0;">return</div>
<div class="a" style="left:1533px;top:172px;width:789px;height:235px;background:#ffffff;border-radius:9px;"></div>
<div class="t" style="left:1573.3px;top:200.4px;font-size:27px;color:#2e3436;font-weight:normal;transform:scaleX(0.9965);transform-origin:0 0;">World coordinates</div>
<div class="t" style="left:1860.3px;top:200.4px;font-size:27px;color:#ee1111;font-weight:normal;transform:scaleX(0.9851);transform-origin:0 0;">X</div>
<div class="t" style="left:1986.9px;top:200.4px;font-size:27px;color:#14a02a;font-weight:normal;transform:scaleX(0.8788);transform-origin:0 0;">Y</div>
<div class="t" style="left:2112.3px;top:200.4px;font-size:27px;color:#1515ee;font-weight:normal;transform:scaleX(0.9333);transform-origin:0 0;">Z</div>
<div class="t" style="left:1571.3px;top:247.8px;font-size:27px;color:#2e3436;font-weight:normal;transform:scaleX(0.9973);transform-origin:0 0;">Rotate (relative)</div>
<div class="t" style="left:1571.3px;top:295.6px;font-size:27px;color:#2e3436;font-weight:normal;transform:scaleX(0.9901);transform-origin:0 0;">Rotate (absolute)</div>
<div class="a" style="left:1814px;top:240px;width:110px;height:42px;background:#fff;border:1.6px solid #b9b9c1;border-radius:4px;"></div>
<div class="t" style="left:1821.6px;top:248.5px;font-size:26px;color:#2e3436;font-weight:normal;transform:scaleX(0.9846);transform-origin:0 0;">0.00</div>
<div class="a" style="left:1940px;top:240px;width:110px;height:42px;background:#fff;border:1.6px solid #b9b9c1;border-radius:4px;"></div>
<div class="t" style="left:1947.6px;top:248.5px;font-size:26px;color:#2e3436;font-weight:normal;transform:scaleX(0.9846);transform-origin:0 0;">0.00</div>
<div class="a" style="left:2066px;top:240px;width:110px;height:42px;background:#fff;border:1.6px solid #b9b9c1;border-radius:4px;"></div>
<div class="t" style="left:2073.6px;top:248.5px;font-size:26px;color:#2e3436;font-weight:normal;transform:scaleX(0.9846);transform-origin:0 0;">0.00</div>
<svg class="a" style="left:2190px;top:247px;" width="12" height="12" viewBox="0 0 12 12"><circle cx="6" cy="6" r="3" fill="none" stroke="#333" stroke-width="1.6"/></svg>
<div class="a" style="left:1814px;top:289px;width:110px;height:42px;background:#fff;border:1.6px solid #b9b9c1;border-radius:4px;"></div>
<div class="t" style="left:1821.6px;top:297.5px;font-size:26px;color:#2e3436;font-weight:normal;transform:scaleX(0.9846);transform-origin:0 0;">0.00</div>
<div class="a" style="left:1940px;top:289px;width:110px;height:42px;background:#fff;border:1.6px solid #b9b9c1;border-radius:4px;"></div>
<div class="t" style="left:1947.6px;top:297.5px;font-size:26px;color:#2e3436;font-weight:normal;transform:scaleX(0.9846);transform-origin:0 0;">0.00</div>
<div class="a" style="left:2066px;top:289px;width:110px;height:42px;background:#fff;border:1.6px solid #b9b9c1;border-radius:4px;"></div>
<div class="t" style="left:2073.6px;top:297.5px;font-size:26px;color:#2e3436;font-weight:normal;transform:scaleX(0.9846);transform-origin:0 0;">0.00</div>
<svg class="a" style="left:2190px;top:296px;" width="12" height="12" viewBox="0 0 12 12"><circle cx="6" cy="6" r="3" fill="none" stroke="#333" stroke-width="1.6"/></svg>
<svg class="a" style="left:1578px;top:347px;" width="44" height="30" viewBox="0 0 44 30"><rect x="3.2" y="2.9" width="38.4" height="24" rx="4" fill="none" stroke="#3cbb6a" stroke-width="2"/><rect x="7.0" y="7.6" width="3.3" height="3.3" rx="0.8" fill="#1fb350"/><rect x="13.4" y="7.6" width="3.2" height="3.3" rx="0.8" fill="#1fb350"/><rect x="19.8" y="7.6" width="3.4" height="3.3" rx="0.8" fill="#1fb350"/><rect x="26.0" y="7.6" width="3.3" height="3.3" rx="0.8" fill="#1fb350"/><rect x="33.0" y="7.6" width="3.2" height="8.4" rx="0.8" fill="#1fb350"/><rect x="7.0" y="12.8" width="6.2" height="3.2" rx="0.8" fill="#1fb350"/><rect x="16.6" y="12.8" width="3.2" height="3.2" rx="0.8" fill="#1fb350"/><rect x="23.2" y="12.8" width="3.2" height="3.2" rx="0.8" fill="#1fb350"/><rect x="30.5" y="12.8" width="5.7" height="3.2" rx="0.8" fill="#1fb350"/><rect x="7.0" y="18.1" width="3.3" height="3.2" rx="0.8" fill="#1fb350"/><rect x="13.4" y="18.1" width="15.9" height="3.2" rx="0.8" fill="#1fb350"/><rect x="33.0" y="18.1" width="3.2" height="3.2" rx="0.8" fill="#1fb350"/></svg>
<div class="a" style="left:1586px;top:172px;width:152px;height:63.5px;background:rgba(58,58,58,0.92);"></div>
<div class="t" style="left:1600.8px;top:189.5px;font-size:27px;color:#ffffff;font-weight:normal;transform:scaleX(0.9979);transform-origin:0 0;">Rotate [R]</div>
<svg class="a" style="left:1260px;top:165px;" width="260" height="170" viewBox="0 0 260 170"><path d="M7,159 L222,25" stroke="#f4271c" stroke-width="6" stroke-linecap="square"/><path d="M250,8 L204,14 L234,34.5 Z" fill="#f4271c"/></svg>
<div class="a" style="left:922px;top:1381px;width:128px;height:181px;background:#c4c4c4;"></div>
<div class="a" style="left:922px;top:1404px;width:128px;height:1px;background:#cbcbcb;"></div>
<div class="a" style="left:922px;top:1449px;width:128px;height:1px;background:#cbcbcb;"></div>
<div class="t" style="left:962.5px;top:1417.8px;font-size:18px;color:#333;font-weight:normal;transform:scaleX(1.5748);transform-origin:0 0;">Top</div>
<div class="t" style="left:953.6px;top:1507.8px;font-size:18px;color:#333;font-weight:normal;transform:scaleX(1.5062);transform-origin:0 0;">Front</div>
<svg class="a" style="left:900px;top:1430px;" width="180" height="160" viewBox="0 0 180 160"><path d="M22,132.4 V44" stroke="#7b7bc8" stroke-width="2.5"/><polygon points="16,46 22,36 28,46" fill="#7b7bc8"/><path d="M22,132.4 H148" stroke="#c87b7b" stroke-width="2.5"/><polygon points="145,126.5 156,132.4 145,138.5" fill="#c87b7b"/></svg>
<div class="t" style="left:914.9px;top:1438.6px;font-size:17px;color:#8080c8;font-weight:normal;transform:scaleX(1.1053);transform-origin:0 0;">Z</div>
<div class="t" style="left:1081.0px;top:1556.6px;font-size:17px;color:#c87878;font-weight:normal;transform:scaleX(1.1429);transform-origin:0 0;">X</div>
<div class="a" style="left:1131px;top:1501px;width:72px;height:72px;background:#f9f9f9;border-radius:36px;"></div>
<svg class="a" style="left:1141px;top:1511px;" width="52" height="52" viewBox="0 0 52 52"><path d="M6,15 V9 Q6,5 10,5 H16 M36,5 H42 Q46,5 46,9 V15 M46,37 V43 Q46,47 42,47 H36 M16,47 H10 Q6,47 6,43 V37" fill="none" stroke="#6a6a6a" stroke-width="3.2" stroke-linecap="round"/><path d="M26,14 L36,19.5 V31 L26,37 L16,31 V19.5 Z M16,19.5 L26,25 L36,19.5 M26,25 V37" fill="none" stroke="#6a6a6a" stroke-width="3" stroke-linejoin="round"/></svg>
<div class="a" style="left:1790px;top:1430px;width:750px;height:149px;background:#fff;border:2px solid #1c9e3a;border-radius:9px;overflow:hidden;"></div>
<div class="a" style="left:1792px;top:1432px;width:16.5px;height:145px;background:#179a32;border-radius:7px 0 0 7px;"></div>
<div class="t" style="left:1819.2px;top:1448.2px;font-size:25px;color:#333;font-weight:normal;transform:scaleX(1.0809);transform-origin:0 0;">Object name: hiwi-skwh-k.stl</div>
<div class="t" style="left:1819.3px;top:1477.6px;font-size:25px;color:#333;font-weight:normal;transform:scaleX(1.0230);transform-origin:0 0;">Size: 30.9375 x 45 x 4 mm</div>
<div class="t" style="left:1820.3px;top:1507.0px;font-size:25px;color:#333;font-weight:normal;transform:scaleX(1.0277);transform-origin:0 0;">Volume: 2300.59 mm&#179;</div>
<div class="t" style="left:1820.1px;top:1536.4px;font-size:25px;color:#333;font-weight:normal;transform:scaleX(1.0368);transform-origin:0 0;">Triangles: 224</div>
<div class="a" style="left:2473px;top:1443px;width:50px;height:50px;background:#f0eff0;border-radius:25px;"></div>
<svg class="a" style="left:2473px;top:1443px;" width="50" height="50" viewBox="0 0 50 50"><path d="M10,10 L40,40 M40,10 L10,40" stroke="#8c8c8c" stroke-width="2"/></svg>
<div class="a" style="left:2499px;top:1547px;width:22px;height:22px;background:#f3f3f3;border-radius:11px;"></div>
<div class="a" style="left:2501px;top:1557px;width:18px;height:1.5px;background:#c8c8c8;"></div>

</body></html>
